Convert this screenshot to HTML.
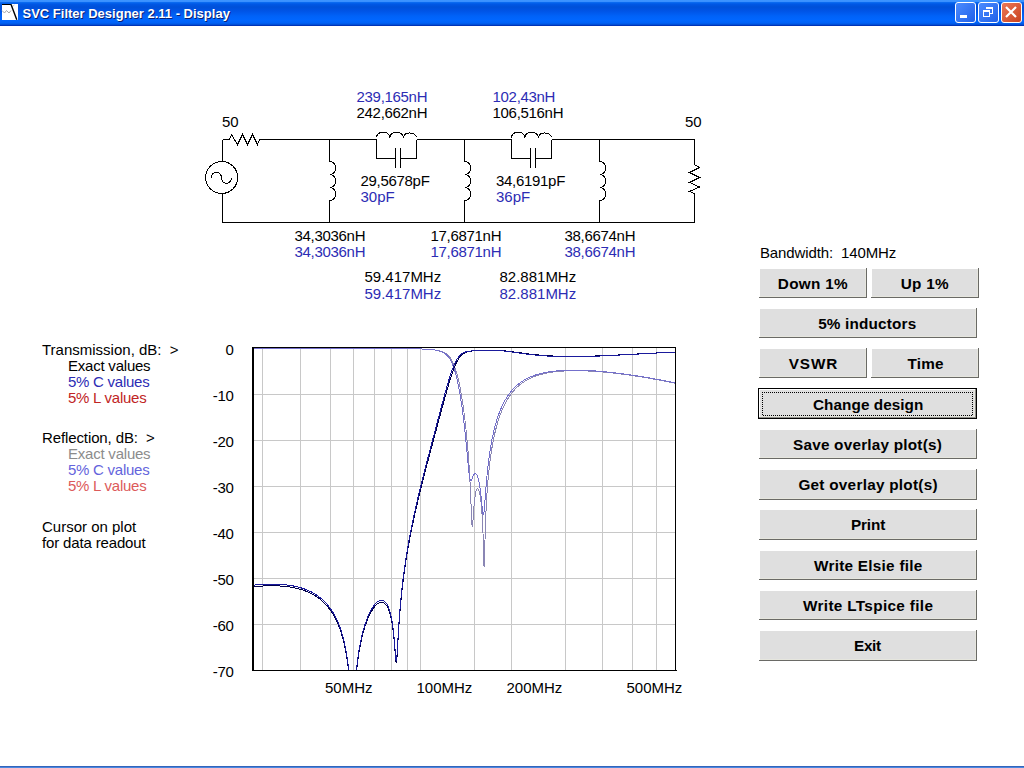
<!DOCTYPE html><html><head><meta charset="utf-8"><style>
html,body{margin:0;padding:0;width:1024px;height:768px;overflow:hidden;background:#fff}
svg{display:block}
text{font-family:"Liberation Sans", sans-serif;font-size:15px}
.b{font-weight:bold}
</style></head><body>
<svg width="1024" height="768" viewBox="0 0 1024 768">
<defs>
<linearGradient id="tb" x1="0" y1="0" x2="0" y2="1"><stop offset="0.0000" stop-color="#3D95FF"/><stop offset="0.0577" stop-color="#3A90FF"/><stop offset="0.0962" stop-color="#0A6AF0"/><stop offset="0.1538" stop-color="#0058E6"/><stop offset="0.2692" stop-color="#0050D8"/><stop offset="0.4231" stop-color="#0054E6"/><stop offset="0.6154" stop-color="#0062F8"/><stop offset="0.7692" stop-color="#0066FF"/><stop offset="0.8846" stop-color="#0062F6"/><stop offset="0.9423" stop-color="#0050D8"/><stop offset="0.9808" stop-color="#0034B8"/><stop offset="1.0000" stop-color="#0034B8"/></linearGradient>
<linearGradient id="bb" x1="0" y1="0" x2="1" y2="1"><stop offset="0" stop-color="#4D8DFF"/><stop offset="1" stop-color="#1F5FE8"/></linearGradient>
<linearGradient id="bc" x1="0" y1="0" x2="1" y2="1"><stop offset="0" stop-color="#EC7A5A"/><stop offset="1" stop-color="#C8401E"/></linearGradient>
<pattern id="dh" x="0" y="0" width="2" height="2" patternUnits="userSpaceOnUse"><rect x="0" y="0" width="1" height="1" fill="#000"/><rect x="1" y="1" width="1" height="1" fill="#000"/></pattern>
<clipPath id="plot"><rect x="252" y="347" width="424" height="324"/></clipPath>
</defs>
<rect x="0" y="0" width="1024" height="26" fill="url(#tb)"/>
<rect x="2" y="4" width="16" height="16" fill="#FFFFFF"/>
<polyline points="2,10.5 4.5,13 6.5,10.5 9,13 11,10.5" fill="none" stroke="#A8A8A8" stroke-width="1"/>
<polyline points="12.5,6.5 14.5,4.8" fill="none" stroke="#C8C8C8" stroke-width="1"/>
<rect x="2" y="4" width="9" height="1" fill="#000"/>
<line x1="11" y1="4.3" x2="16.8" y2="19.8" stroke="#000" stroke-width="1.4"/>
<text x="23.5" y="19" class="b" style="font-size:13px" fill="#0A1E70">SVC Filter Designer 2.11 - Display</text>
<text x="22.5" y="18" class="b" style="font-size:13px" fill="#FFFFFF">SVC Filter Designer 2.11 - Display</text>
<rect x="955.5" y="2.5" width="20" height="20" rx="2.5" fill="url(#bb)" stroke="#FFFFFF" stroke-width="1"/>
<rect x="978.5" y="2.5" width="20" height="20" rx="2.5" fill="url(#bb)" stroke="#FFFFFF" stroke-width="1"/>
<rect x="1001.5" y="2.5" width="20" height="20" rx="2.5" fill="url(#bc)" stroke="#FFFFFF" stroke-width="1"/>
<rect x="960" y="15" width="7" height="3" fill="#FFFFFF"/>
<path d="M983,10h7v2h-7z M983,12h1v5h-1z M989,12h1v5h-1z M983,16h7v1h-7z" fill="#FFF"/>
<path d="M986,7h7v2h-7z M992,9h1v5h-1z M990,13h3v1h-3z" fill="#FFF"/>
<path d="M1006,7 L1016,17 M1016,7 L1006,17" stroke="#FFF" stroke-width="2.2"/>
<rect x="0" y="766" width="1024" height="1" fill="#3464BA"/>
<rect x="0" y="767" width="1024" height="1" fill="#4A88E0"/>
<path d="M222.5,139.5V162 M222.5,193V222.5 M222.5,139.5H229.5 M229.5,139.5L231.5,134.5L237.5,144.5L242.5,134.5L247.5,144.5L252.5,134.5L257.5,144.5L259.5,139.5 M259.5,139.5H376.5 M416.5,139.5H511.5 M551.5,139.5H694.5 M222.5,222.5H694.5" fill="none" stroke="#000" stroke-width="1" shape-rendering="crispEdges"/>
<circle cx="221.7" cy="177.5" r="16" fill="none" stroke="#000" stroke-width="1" shape-rendering="crispEdges"/>
<path d="M211.4,177.6 A5,5.6 0 0 1 221.4,177.6 A5,5.6 0 0 0 231.4,177.8" fill="none" stroke="#000" stroke-width="1" shape-rendering="crispEdges"/>
<path d="M329.5,139.5V161.5 A6.5,6.5 0 0 1 329.5,174.5 A6.5,6.5 0 0 1 329.5,187.5 A6.5,6.5 0 0 1 329.5,200.5 V222.5" fill="none" stroke="#000" stroke-width="1" shape-rendering="crispEdges"/>
<path d="M464.5,139.5V161.5 A6.5,6.5 0 0 1 464.5,174.5 A6.5,6.5 0 0 1 464.5,187.5 A6.5,6.5 0 0 1 464.5,200.5 V222.5" fill="none" stroke="#000" stroke-width="1" shape-rendering="crispEdges"/>
<path d="M599.5,139.5V161.5 A6.5,6.5 0 0 1 599.5,174.5 A6.5,6.5 0 0 1 599.5,187.5 A6.5,6.5 0 0 1 599.5,200.5 V222.5" fill="none" stroke="#000" stroke-width="1" shape-rendering="crispEdges"/>
<path d="M376.5,139.5V158.5H395.5M400.5,158.5H416.5V139.5" fill="none" stroke="#000" stroke-width="1" shape-rendering="crispEdges"/>
<path d="M395.5,148V168M400.5,148V168" fill="none" stroke="#000" stroke-width="1" shape-rendering="crispEdges"/>
<path d="M376.5,137.5 A6.7,5.5 0 0 1 389.9,137.5 A6.7,5.5 0 0 1 403.3,137.5 A6.7,5.5 0 0 1 416.5,137.5" fill="none" stroke="#000" stroke-width="1" shape-rendering="crispEdges"/>
<path d="M511.5,139.5V158.5H530.5M535.5,158.5H551.5V139.5" fill="none" stroke="#000" stroke-width="1" shape-rendering="crispEdges"/>
<path d="M530.5,148V168M535.5,148V168" fill="none" stroke="#000" stroke-width="1" shape-rendering="crispEdges"/>
<path d="M511.5,137.5 A6.7,5.5 0 0 1 524.9,137.5 A6.7,5.5 0 0 1 538.3,137.5 A6.7,5.5 0 0 1 551.5,137.5" fill="none" stroke="#000" stroke-width="1" shape-rendering="crispEdges"/>
<path d="M694.5,139.5V164.5L699.5,167.5L689.5,172.5L699.5,177.5L689.5,182.5L699.5,187L689.5,191.5L694.5,193.5V222.5" fill="none" stroke="#000" stroke-width="1" shape-rendering="crispEdges"/>
<text x="222" y="126.5" fill="#000000">50</text>
<text x="685" y="126.5" fill="#000000">50</text>
<text x="356.5" y="101.5" fill="#2C2CB4" letter-spacing="-0.3">239,165nH</text>
<text x="356.5" y="118" fill="#000000" letter-spacing="-0.3">242,662nH</text>
<text x="360.5" y="185.5" fill="#000000" letter-spacing="-0.3">29,5678pF</text>
<text x="360.5" y="201.5" fill="#2C2CB4">30pF</text>
<text x="492.5" y="101.5" fill="#2C2CB4" letter-spacing="-0.3">102,43nH</text>
<text x="492.5" y="118" fill="#000000" letter-spacing="-0.3">106,516nH</text>
<text x="496" y="185.5" fill="#000000" letter-spacing="-0.3">34,6191pF</text>
<text x="496" y="201.5" fill="#2C2CB4">36pF</text>
<text x="294.5" y="240.5" fill="#000000" letter-spacing="-0.3">34,3036nH</text>
<text x="294.5" y="256.5" fill="#2C2CB4" letter-spacing="-0.3">34,3036nH</text>
<text x="430.5" y="240.5" fill="#000000" letter-spacing="-0.3">17,6871nH</text>
<text x="430.5" y="256.5" fill="#2C2CB4" letter-spacing="-0.3">17,6871nH</text>
<text x="564.5" y="240.5" fill="#000000" letter-spacing="-0.3">38,6674nH</text>
<text x="564.5" y="256.5" fill="#2C2CB4" letter-spacing="-0.3">38,6674nH</text>
<text x="364.5" y="281.5" fill="#000000">59.417MHz</text>
<text x="364.5" y="298.5" fill="#2C2CB4">59.417MHz</text>
<text x="499.5" y="281.5" fill="#000000">82.881MHz</text>
<text x="499.5" y="298.5" fill="#2C2CB4">82.881MHz</text>
<text x="42" y="354.5" fill="#000000">Transmission, dB:&#160;&#160;&gt;</text>
<text x="68" y="370.5" fill="#000000" letter-spacing="-0.22">Exact values</text>
<text x="68" y="386.5" fill="#2C2CB4" letter-spacing="-0.25">5% C values</text>
<text x="68" y="402.5" fill="#C02424" letter-spacing="-0.25">5% L values</text>
<text x="42" y="442.5" fill="#000000" letter-spacing="-0.11">Reflection, dB:&#160;&#160;&gt;</text>
<text x="68" y="459" fill="#8C8C8C" letter-spacing="-0.22">Exact values</text>
<text x="68" y="475" fill="#6464DC" letter-spacing="-0.25">5% C values</text>
<text x="68" y="491" fill="#DC5A5A" letter-spacing="-0.25">5% L values</text>
<text x="42" y="531.5" fill="#000000">Cursor on plot</text>
<text x="42" y="547.5" fill="#000000" letter-spacing="-0.15">for data readout</text>
<text x="760" y="257.5" fill="#000000" letter-spacing="-0.13">Bandwidth:&#160;&#160;140MHz</text>
<path d="M262.5,348V670 M300.5,348V670 M330.5,348V670 M353.5,348V670 M374.5,348V670 M391.5,348V670 M407.5,348V670 M420.5,348V670 M474.5,348V670 M511.5,348V670 M565.5,348V670 M602.5,348V670 M632.5,348V670 M656.5,348V670 M254,394.5H675 M254,440.5H675 M254,486.5H675 M254,532.5H675 M254,578.5H675 M254,624.5H675" stroke="#C8C8C8" stroke-width="1" fill="none"/>
<text x="233.6" y="355" fill="#000000" text-anchor="end" letter-spacing="-0.3">0</text>
<text x="233.6" y="401" fill="#000000" text-anchor="end" letter-spacing="-0.3">-10</text>
<text x="233.6" y="447" fill="#000000" text-anchor="end" letter-spacing="-0.3">-20</text>
<text x="233.6" y="493" fill="#000000" text-anchor="end" letter-spacing="-0.3">-30</text>
<text x="233.6" y="539" fill="#000000" text-anchor="end" letter-spacing="-0.3">-40</text>
<text x="233.6" y="585" fill="#000000" text-anchor="end" letter-spacing="-0.3">-50</text>
<text x="233.6" y="631" fill="#000000" text-anchor="end" letter-spacing="-0.3">-60</text>
<text x="233.6" y="677" fill="#000000" text-anchor="end" letter-spacing="-0.3">-70</text>
<text x="325" y="693" fill="#000000">50MHz</text>
<text x="416.5" y="693" fill="#000000">100MHz</text>
<text x="506.5" y="693" fill="#000000">200MHz</text>
<text x="626.5" y="693" fill="#000000">500MHz</text>
<g clip-path="url(#plot)" fill="none" stroke-width="1" shape-rendering="crispEdges">
<polyline points="253.0,348.09 253.2,348.09 253.5,348.09 253.8,348.09 254.0,348.09 254.2,348.09 254.5,348.09 254.8,348.09 255.0,348.09 255.2,348.09 255.5,348.09 255.8,348.09 256.0,348.09 256.2,348.09 256.5,348.09 256.8,348.09 257.0,348.09 257.2,348.09 257.5,348.09 257.8,348.09 258.0,348.09 258.2,348.09 258.5,348.09 258.8,348.09 259.0,348.09 259.2,348.10 259.5,348.10 259.8,348.10 260.0,348.10 260.2,348.10 260.5,348.10 260.8,348.10 261.0,348.10 261.2,348.10 261.5,348.10 261.8,348.10 262.0,348.10 262.2,348.10 262.5,348.10 262.8,348.10 263.0,348.10 263.2,348.10 263.5,348.10 263.8,348.10 264.0,348.10 264.2,348.10 264.5,348.10 264.8,348.10 265.0,348.10 265.2,348.10 265.5,348.10 265.8,348.10 266.0,348.10 266.2,348.10 266.5,348.10 266.8,348.10 267.0,348.10 267.2,348.10 267.5,348.10 267.8,348.10 268.0,348.10 268.2,348.10 268.5,348.10 268.8,348.10 269.0,348.10 269.2,348.10 269.5,348.10 269.8,348.10 270.0,348.10 270.2,348.10 270.5,348.11 270.8,348.11 271.0,348.11 271.2,348.11 271.5,348.11 271.8,348.11 272.0,348.11 272.2,348.11 272.5,348.11 272.8,348.11 273.0,348.11 273.2,348.11 273.5,348.11 273.8,348.11 274.0,348.11 274.2,348.11 274.5,348.11 274.8,348.11 275.0,348.11 275.2,348.11 275.5,348.11 275.8,348.11 276.0,348.11 276.2,348.11 276.5,348.11 276.8,348.11 277.0,348.11 277.2,348.11 277.5,348.11 277.8,348.11 278.0,348.11 278.2,348.11 278.5,348.11 278.8,348.11 279.0,348.11 279.2,348.11 279.5,348.11 279.8,348.11 280.0,348.11 280.2,348.11 280.5,348.11 280.8,348.12 281.0,348.12 281.2,348.12 281.5,348.12 281.8,348.12 282.0,348.12 282.2,348.12 282.5,348.12 282.8,348.12 283.0,348.12 283.2,348.12 283.5,348.12 283.8,348.12 284.0,348.12 284.2,348.12 284.5,348.12 284.8,348.12 285.0,348.12 285.2,348.12 285.5,348.12 285.8,348.12 286.0,348.12 286.2,348.12 286.5,348.12 286.8,348.12 287.0,348.12 287.2,348.12 287.5,348.12 287.8,348.12 288.0,348.12 288.2,348.12 288.5,348.12 288.8,348.12 289.0,348.12 289.2,348.12 289.5,348.12 289.8,348.13 290.0,348.13 290.2,348.13 290.5,348.13 290.8,348.13 291.0,348.13 291.2,348.13 291.5,348.13 291.8,348.13 292.0,348.13 292.2,348.13 292.5,348.13 292.8,348.13 293.0,348.13 293.2,348.13 293.5,348.13 293.8,348.13 294.0,348.13 294.2,348.13 294.5,348.13 294.8,348.13 295.0,348.13 295.2,348.13 295.5,348.13 295.8,348.13 296.0,348.13 296.2,348.13 296.5,348.13 296.8,348.13 297.0,348.13 297.2,348.13 297.5,348.13 297.8,348.14 298.0,348.14 298.2,348.14 298.5,348.14 298.8,348.14 299.0,348.14 299.2,348.14 299.5,348.14 299.8,348.14 300.0,348.14 300.2,348.14 300.5,348.14 300.8,348.14 301.0,348.14 301.2,348.14 301.5,348.14 301.8,348.14 302.0,348.14 302.2,348.14 302.5,348.14 302.8,348.14 303.0,348.14 303.2,348.14 303.5,348.14 303.8,348.14 304.0,348.14 304.2,348.14 304.5,348.14 304.8,348.14 305.0,348.14 305.2,348.15 305.5,348.15 305.8,348.15 306.0,348.15 306.2,348.15 306.5,348.15 306.8,348.15 307.0,348.15 307.2,348.15 307.5,348.15 307.8,348.15 308.0,348.15 308.2,348.15 308.5,348.15 308.8,348.15 309.0,348.15 309.2,348.15 309.5,348.15 309.8,348.15 310.0,348.15 310.2,348.15 310.5,348.15 310.8,348.15 311.0,348.15 311.2,348.15 311.5,348.15 311.8,348.16 312.0,348.16 312.2,348.16 312.5,348.16 312.8,348.16 313.0,348.16 313.2,348.16 313.5,348.16 313.8,348.16 314.0,348.16 314.2,348.16 314.5,348.16 314.8,348.16 315.0,348.16 315.2,348.16 315.5,348.16 315.8,348.16 316.0,348.16 316.2,348.16 316.5,348.16 316.8,348.16 317.0,348.16 317.2,348.16 317.5,348.16 317.8,348.16 318.0,348.17 318.2,348.17 318.5,348.17 318.8,348.17 319.0,348.17 319.2,348.17 319.5,348.17 319.8,348.17 320.0,348.17 320.2,348.17 320.5,348.17 320.8,348.17 321.0,348.17 321.2,348.17 321.5,348.17 321.8,348.17 322.0,348.17 322.2,348.17 322.5,348.17 322.8,348.17 323.0,348.17 323.2,348.17 323.5,348.18 323.8,348.18 324.0,348.18 324.2,348.18 324.5,348.18 324.8,348.18 325.0,348.18 325.2,348.18 325.5,348.18 325.8,348.18 326.0,348.18 326.2,348.18 326.5,348.18 326.8,348.18 327.0,348.18 327.2,348.18 327.5,348.18 327.8,348.18 328.0,348.18 328.2,348.18 328.5,348.19 328.8,348.19 329.0,348.19 329.2,348.19 329.5,348.19 329.8,348.19 330.0,348.19 330.2,348.19 330.5,348.19 330.8,348.19 331.0,348.19 331.2,348.19 331.5,348.19 331.8,348.19 332.0,348.19 332.2,348.19 332.5,348.19 332.8,348.19 333.0,348.19 333.2,348.20 333.5,348.20 333.8,348.20 334.0,348.20 334.2,348.20 334.5,348.20 334.8,348.20 335.0,348.20 335.2,348.20 335.5,348.20 335.8,348.20 336.0,348.20 336.2,348.20 336.5,348.20 336.8,348.20 337.0,348.20 337.2,348.20 337.5,348.20 337.8,348.21 338.0,348.21 338.2,348.21 338.5,348.21 338.8,348.21 339.0,348.21 339.2,348.21 339.5,348.21 339.8,348.21 340.0,348.21 340.2,348.21 340.5,348.21 340.8,348.21 341.0,348.21 341.2,348.21 341.5,348.21 341.8,348.22 342.0,348.22 342.2,348.22 342.5,348.22 342.8,348.22 343.0,348.22 343.2,348.22 343.5,348.22 343.8,348.22 344.0,348.22 344.2,348.22 344.5,348.22 344.8,348.22 345.0,348.22 345.2,348.22 345.5,348.23 345.8,348.23 346.0,348.23 346.2,348.23 346.5,348.23 346.8,348.23 347.0,348.23 347.2,348.23 347.5,348.23 347.8,348.23 348.0,348.23 348.2,348.23 348.5,348.23 348.8,348.23 349.0,348.24 349.2,348.24 349.5,348.24 349.8,348.24 350.0,348.24 350.2,348.24 350.5,348.24 350.8,348.24 351.0,348.24 351.2,348.24 351.5,348.24 351.8,348.24 352.0,348.24 352.2,348.25 352.5,348.25 352.8,348.25 353.0,348.25 353.2,348.25 353.5,348.25 353.8,348.25 354.0,348.25 354.2,348.25 354.5,348.25 354.8,348.25 355.0,348.25 355.2,348.25 355.5,348.26 355.8,348.26 356.0,348.26 356.2,348.26 356.5,348.26 356.8,348.26 357.0,348.26 357.2,348.26 357.5,348.26 357.8,348.26 358.0,348.26 358.2,348.27 358.5,348.27 358.8,348.27 359.0,348.27 359.2,348.27 359.5,348.27 359.8,348.27 360.0,348.27 360.2,348.27 360.5,348.27 360.8,348.27 361.0,348.28 361.2,348.28 361.5,348.28 361.8,348.28 362.0,348.28 362.2,348.28 362.5,348.28 362.8,348.28 363.0,348.28 363.2,348.28 363.5,348.28 363.8,348.29 364.0,348.29 364.2,348.29 364.5,348.29 364.8,348.29 365.0,348.29 365.2,348.29 365.5,348.29 365.8,348.29 366.0,348.30 366.2,348.30 366.5,348.30 366.8,348.30 367.0,348.30 367.2,348.30 367.5,348.30 367.8,348.30 368.0,348.30 368.2,348.31 368.5,348.31 368.8,348.31 369.0,348.31 369.2,348.31 369.5,348.31 369.8,348.31 370.0,348.31 370.2,348.31 370.5,348.32 370.8,348.32 371.0,348.32 371.2,348.32 371.5,348.32 371.8,348.32 372.0,348.32 372.2,348.32 372.5,348.33 372.8,348.33 373.0,348.33 373.2,348.33 373.5,348.33 373.8,348.33 374.0,348.33 374.2,348.33 374.5,348.34 374.8,348.34 375.0,348.34 375.2,348.34 375.5,348.34 375.8,348.34 376.0,348.34 376.2,348.34 376.5,348.35 376.8,348.35 377.0,348.35 377.2,348.35 377.5,348.35 377.8,348.35 378.0,348.35 378.2,348.36 378.5,348.36 378.8,348.36 379.0,348.36 379.2,348.36 379.5,348.36 379.8,348.36 380.0,348.37 380.2,348.37 380.5,348.37 380.8,348.37 381.0,348.37 381.2,348.37 381.5,348.38 381.8,348.38 382.0,348.38 382.2,348.38 382.5,348.38 382.8,348.38 383.0,348.39 383.2,348.39 383.5,348.39 383.8,348.39 384.0,348.39 384.2,348.39 384.5,348.40 384.8,348.40 385.0,348.40 385.2,348.40 385.5,348.40 385.8,348.40 386.0,348.41 386.2,348.41 386.5,348.41 386.8,348.41 387.0,348.41 387.2,348.42 387.5,348.42 387.8,348.42 388.0,348.42 388.2,348.42 388.5,348.43 388.8,348.43 389.0,348.43 389.2,348.43 389.5,348.43 389.8,348.44 390.0,348.44 390.2,348.44 390.5,348.44 390.8,348.44 391.0,348.45 391.2,348.45 391.5,348.45 391.8,348.45 392.0,348.45 392.2,348.46 392.5,348.46 392.8,348.46 393.0,348.46 393.2,348.47 393.5,348.47 393.8,348.47 394.0,348.47 394.2,348.47 394.5,348.48 394.8,348.48 395.0,348.48 395.2,348.48 395.5,348.49 395.8,348.49 396.0,348.49 396.2,348.49 396.5,348.50 396.8,348.50 397.0,348.50 397.2,348.50 397.5,348.51 397.8,348.51 398.0,348.51 398.2,348.52 398.5,348.52 398.8,348.52 399.0,348.52 399.2,348.53 399.5,348.53 399.8,348.53 400.0,348.53 400.2,348.54 400.5,348.54 400.8,348.54 401.0,348.55 401.2,348.55 401.5,348.55 401.8,348.56 402.0,348.56 402.2,348.56 402.5,348.57 402.8,348.57 403.0,348.57 403.2,348.58 403.5,348.58 403.8,348.58 404.0,348.59 404.2,348.59 404.5,348.59 404.8,348.60 405.0,348.60 405.2,348.60 405.5,348.61 405.8,348.61 406.0,348.61 406.2,348.62 406.5,348.62 406.8,348.63 407.0,348.63 407.2,348.63 407.5,348.64 407.8,348.64 408.0,348.65 408.2,348.65 408.5,348.65 408.8,348.66 409.0,348.66 409.2,348.67 409.5,348.67 409.8,348.68 410.0,348.68 410.2,348.68 410.5,348.69 410.8,348.69 411.0,348.70 411.2,348.70 411.5,348.71 411.8,348.71 412.0,348.72 412.2,348.72 412.5,348.73 412.8,348.73 413.0,348.74 413.2,348.74 413.5,348.75 413.8,348.75 414.0,348.76 414.2,348.77 414.5,348.77 414.8,348.78 415.0,348.78 415.2,348.79 415.5,348.80 415.8,348.80 416.0,348.81 416.2,348.81 416.5,348.82 416.8,348.83 417.0,348.83 417.2,348.84 417.5,348.85 417.8,348.85 418.0,348.86 418.2,348.87 418.5,348.88 418.8,348.88 419.0,348.89 419.2,348.90 419.5,348.91 419.8,348.91 420.0,348.92 420.2,348.93 420.5,348.94 420.8,348.95 421.0,348.96 421.2,348.97 421.5,348.97 421.8,348.98 422.0,348.99 422.2,349.00 422.5,349.01 422.8,349.02 423.0,349.03 423.2,349.04 423.5,349.05 423.8,349.06 424.0,349.07 424.2,349.09 424.5,349.10 424.8,349.11 425.0,349.12 425.2,349.13 425.5,349.15 425.8,349.16 426.0,349.17 426.2,349.18 426.5,349.20 426.8,349.21 427.0,349.23 427.2,349.24 427.5,349.26 427.8,349.27 428.0,349.29 428.2,349.30 428.5,349.32 428.8,349.34 429.0,349.35 429.2,349.37 429.5,349.39 429.8,349.41 430.0,349.43 430.2,349.45 430.5,349.47 430.8,349.49 431.0,349.51 431.2,349.53 431.5,349.55 431.8,349.58 432.0,349.60 432.2,349.62 432.5,349.65 432.8,349.68 433.0,349.70 433.2,349.73 433.5,349.76 433.8,349.79 434.0,349.82 434.2,349.85 434.5,349.88 434.8,349.91 435.0,349.95 435.2,349.98 435.5,350.02 435.8,350.05 436.0,350.09 436.2,350.13 436.5,350.17 436.8,350.22 437.0,350.26 437.2,350.31 437.5,350.35 437.8,350.40 438.0,350.45 438.2,350.50 438.5,350.56 438.8,350.61 439.0,350.67 439.2,350.73 439.5,350.80 439.8,350.86 440.0,350.93 440.2,351.00 440.5,351.07 440.8,351.14 441.0,351.22 441.2,351.30 441.5,351.39 441.8,351.47 442.0,351.56 442.2,351.66 442.5,351.75 442.8,351.86 443.0,351.96 443.2,352.07 443.5,352.19 443.8,352.30 444.0,352.43 444.2,352.56 444.5,352.69 444.8,352.83 445.0,352.97 445.2,353.13 445.5,353.28 445.8,353.45 446.0,353.62 446.2,353.80 446.5,353.98 446.8,354.17 447.0,354.37 447.2,354.58 447.5,354.80 447.8,355.03 448.0,355.27 448.2,355.51 448.5,355.77 448.8,356.04 449.0,356.32 449.2,356.61 449.5,356.91 449.8,357.22 450.0,357.55 450.2,357.89 450.5,358.25 450.8,358.62 451.0,359.00 451.2,359.40 451.5,359.82 451.8,360.25 452.0,360.70 452.2,361.17 452.5,361.66 452.8,362.16 453.0,362.68 453.2,363.23 453.5,363.79 453.8,364.38 454.0,364.98 454.2,365.61 454.5,366.26 454.8,366.94 455.0,367.64 455.2,368.36 455.5,369.11 455.8,369.88 456.0,370.67 456.2,371.50 456.5,372.35 456.8,373.22 457.0,374.13 457.2,375.06 457.5,376.02 457.8,377.01 458.0,378.03 458.2,379.07 458.5,380.15 458.8,381.26 459.0,382.40 459.2,383.57 459.5,384.77 459.8,386.00 460.0,387.26 460.2,388.56 460.5,389.89 460.8,391.26 461.0,392.65 461.2,394.09 461.5,395.56 461.8,397.06 462.0,398.61 462.2,400.19 462.5,401.81 462.8,403.47 463.0,405.17 463.2,406.92 463.5,408.70 463.8,410.54 464.0,412.42 464.2,414.34 464.5,416.32 464.8,418.35 465.0,420.44 465.2,422.58 465.5,424.79 465.8,427.06 466.0,429.40 466.2,431.81 466.5,434.30 466.8,436.87 467.0,439.53 467.2,442.28 467.5,445.13 467.8,448.10 468.0,451.19 468.2,454.41 468.5,457.77 468.8,461.30 469.0,465.00 469.2,468.90 469.5,473.02 469.8,477.38 470.0,482.00 470.2,486.92 470.5,492.16 470.8,497.72 471.0,503.56 471.2,509.58 471.5,515.50 471.8,520.81 472.0,524.70 472.2,526.44 472.5,525.81 472.8,523.37 473.0,519.94 473.2,516.20 473.5,512.52 473.8,509.10 474.0,506.00 474.2,503.23 474.5,500.78 474.8,498.62 475.0,496.73 475.2,495.09 475.5,493.67 475.8,492.46 476.0,491.44 476.2,490.59 476.5,489.91 476.8,489.39 477.0,489.01 477.2,488.78 477.5,488.68 477.8,488.72 478.0,488.89 478.2,489.19 478.5,489.63 478.8,490.20 479.0,490.90 479.2,491.74 479.5,492.73 479.8,493.88 480.0,495.19 480.2,496.67 480.5,498.34 480.8,500.23 481.0,502.34 481.2,504.72 481.5,507.38 481.8,510.39 482.0,513.80 482.2,517.68 482.5,522.14 482.8,527.29 483.0,533.30 483.2,540.37 483.5,548.63 483.8,557.76 484.0,565.64 484.2,567.14 484.5,560.38 484.8,550.29 485.0,540.47 485.2,531.79 485.5,524.23 485.8,517.62 486.0,511.77 486.2,506.54 486.5,501.81 486.8,497.49 487.0,493.52 487.2,489.85 487.5,486.44 487.8,483.24 488.0,480.25 488.2,477.42 488.5,474.75 488.8,472.22 489.0,469.81 489.2,467.52 489.5,465.32 489.8,463.23 490.0,461.21 490.2,459.28 490.5,457.43 490.8,455.64 491.0,453.91 491.2,452.25 491.5,450.64 491.8,449.09 492.0,447.58 492.2,446.12 492.5,444.71 492.8,443.33 493.0,442.00 493.2,440.70 493.5,439.44 493.8,438.22 494.0,437.02 494.2,435.86 494.5,434.73 494.8,433.62 495.0,432.55 495.2,431.49 495.5,430.47 495.8,429.47 496.0,428.49 496.2,427.53 496.5,426.59 496.8,425.68 497.0,424.79 497.2,423.91 497.5,423.05 497.8,422.22 498.0,421.39 498.2,420.59 498.5,419.80 498.8,419.03 499.0,418.27 499.2,417.53 499.5,416.80 499.8,416.09 500.0,415.39 500.2,414.70 500.5,414.03 500.8,413.37 501.0,412.72 501.2,412.08 501.5,411.46 501.8,410.84 502.0,410.24 502.2,409.65 502.5,409.06 502.8,408.49 503.0,407.93 503.2,407.38 503.5,406.83 503.8,406.30 504.0,405.78 504.2,405.26 504.5,404.75 504.8,404.25 505.0,403.76 505.2,403.28 505.5,402.80 505.8,402.34 506.0,401.88 506.2,401.43 506.5,400.98 506.8,400.54 507.0,400.11 507.2,399.69 507.5,399.27 507.8,398.86 508.0,398.46 508.2,398.06 508.5,397.66 508.8,397.28 509.0,396.90 509.2,396.52 509.5,396.16 509.8,395.79 510.0,395.43 510.2,395.08 510.5,394.73 510.8,394.39 511.0,394.06 511.2,393.72 511.5,393.40 511.8,393.07 512.0,392.76 512.2,392.44 512.5,392.13 512.8,391.83 513.0,391.53 513.2,391.24 513.5,390.94 513.8,390.66 514.0,390.38 514.2,390.10 514.5,389.82 514.8,389.55 515.0,389.28 515.2,389.02 515.5,388.76 515.8,388.50 516.0,388.25 516.2,388.00 516.5,387.76 516.8,387.51 517.0,387.28 517.2,387.04 517.5,386.81 517.8,386.58 518.0,386.35 518.2,386.13 518.5,385.91 518.8,385.69 519.0,385.48 519.2,385.27 519.5,385.06 519.8,384.86 520.0,384.65 520.2,384.45 520.5,384.26 520.8,384.06 521.0,383.87 521.2,383.68 521.5,383.49 521.8,383.31 522.0,383.13 522.2,382.95 522.5,382.77 522.8,382.60 523.0,382.42 523.2,382.25 523.5,382.08 523.8,381.92 524.0,381.76 524.2,381.59 524.5,381.43 524.8,381.28 525.0,381.12 525.2,380.97 525.5,380.82 525.8,380.67 526.0,380.52 526.2,380.38 526.5,380.23 526.8,380.09 527.0,379.95 527.2,379.81 527.5,379.68 527.8,379.54 528.0,379.41 528.2,379.28 528.5,379.15 528.8,379.02 529.0,378.90 529.2,378.77 529.5,378.65 529.8,378.53 530.0,378.41 530.2,378.29 530.5,378.17 530.8,378.06 531.0,377.94 531.2,377.83 531.5,377.72 531.8,377.61 532.0,377.50 532.2,377.40 532.5,377.29 532.8,377.19 533.0,377.09 533.2,376.99 533.5,376.89 533.8,376.79 534.0,376.69 534.2,376.59 534.5,376.50 534.8,376.40 535.0,376.31 535.2,376.22 535.5,376.13 535.8,376.04 536.0,375.95 536.2,375.87 536.5,375.78 536.8,375.70 537.0,375.61 537.2,375.53 537.5,375.45 537.8,375.37 538.0,375.29 538.2,375.21 538.5,375.14 538.8,375.06 539.0,374.98 539.2,374.91 539.5,374.84 539.8,374.77 540.0,374.69 540.2,374.62 540.5,374.55 540.8,374.49 541.0,374.42 541.2,374.35 541.5,374.29 541.8,374.22 542.0,374.16 542.2,374.09 542.5,374.03 542.8,373.97 543.0,373.91 543.2,373.85 543.5,373.79 543.8,373.73 544.0,373.67 544.2,373.62 544.5,373.56 544.8,373.51 545.0,373.45 545.2,373.40 545.5,373.34 545.8,373.29 546.0,373.24 546.2,373.19 546.5,373.14 546.8,373.09 547.0,373.04 547.2,372.99 547.5,372.95 547.8,372.90 548.0,372.85 548.2,372.81 548.5,372.76 548.8,372.72 549.0,372.68 549.2,372.63 549.5,372.59 549.8,372.55 550.0,372.51 550.2,372.47 550.5,372.43 550.8,372.39 551.0,372.35 551.2,372.31 551.5,372.27 551.8,372.24 552.0,372.20 552.2,372.17 552.5,372.13 552.8,372.10 553.0,372.06 553.2,372.03 553.5,372.00 553.8,371.96 554.0,371.93 554.2,371.90 554.5,371.87 554.8,371.84 555.0,371.81 555.2,371.78 555.5,371.75 555.8,371.72 556.0,371.69 556.2,371.67 556.5,371.64 556.8,371.61 557.0,371.59 557.2,371.56 557.5,371.54 557.8,371.51 558.0,371.49 558.2,371.46 558.5,371.44 558.8,371.42 559.0,371.39 559.2,371.37 559.5,371.35 559.8,371.33 560.0,371.31 560.2,371.29 560.5,371.27 560.8,371.25 561.0,371.23 561.2,371.21 561.5,371.19 561.8,371.18 562.0,371.16 562.2,371.14 562.5,371.12 562.8,371.11 563.0,371.09 563.2,371.08 563.5,371.06 563.8,371.05 564.0,371.03 564.2,371.02 564.5,371.00 564.8,370.99 565.0,370.98 565.2,370.97 565.5,370.95 565.8,370.94 566.0,370.93 566.2,370.92 566.5,370.91 566.8,370.90 567.0,370.89 567.2,370.88 567.5,370.87 567.8,370.86 568.0,370.85 568.2,370.84 568.5,370.83 568.8,370.82 569.0,370.82 569.2,370.81 569.5,370.80 569.8,370.80 570.0,370.79 570.2,370.78 570.5,370.78 570.8,370.77 571.0,370.77 571.2,370.76 571.5,370.76 571.8,370.75 572.0,370.75 572.2,370.75 572.5,370.74 572.8,370.74 573.0,370.74 573.2,370.73 573.5,370.73 573.8,370.73 574.0,370.73 574.2,370.73 574.5,370.72 574.8,370.72 575.0,370.72 575.2,370.72 575.5,370.72 575.8,370.72 576.0,370.72 576.2,370.72 576.5,370.72 576.8,370.73 577.0,370.73 577.2,370.73 577.5,370.73 577.8,370.73 578.0,370.74 578.2,370.74 578.5,370.74 578.8,370.74 579.0,370.75 579.2,370.75 579.5,370.76 579.8,370.76 580.0,370.76 580.2,370.77 580.5,370.77 580.8,370.78 581.0,370.78 581.2,370.79 581.5,370.80 581.8,370.80 582.0,370.81 582.2,370.81 582.5,370.82 582.8,370.83 583.0,370.84 583.2,370.84 583.5,370.85 583.8,370.86 584.0,370.87 584.2,370.87 584.5,370.88 584.8,370.89 585.0,370.90 585.2,370.91 585.5,370.92 585.8,370.93 586.0,370.94 586.2,370.95 586.5,370.96 586.8,370.97 587.0,370.98 587.2,370.99 587.5,371.00 587.8,371.01 588.0,371.02 588.2,371.04 588.5,371.05 588.8,371.06 589.0,371.07 589.2,371.08 589.5,371.10 589.8,371.11 590.0,371.12 590.2,371.13 590.5,371.15 590.8,371.16 591.0,371.18 591.2,371.19 591.5,371.20 591.8,371.22 592.0,371.23 592.2,371.25 592.5,371.26 592.8,371.28 593.0,371.29 593.2,371.31 593.5,371.32 593.8,371.34 594.0,371.35 594.2,371.37 594.5,371.39 594.8,371.40 595.0,371.42 595.2,371.44 595.5,371.45 595.8,371.47 596.0,371.49 596.2,371.50 596.5,371.52 596.8,371.54 597.0,371.56 597.2,371.58 597.5,371.59 597.8,371.61 598.0,371.63 598.2,371.65 598.5,371.67 598.8,371.69 599.0,371.71 599.2,371.73 599.5,371.75 599.8,371.77 600.0,371.79 600.2,371.81 600.5,371.83 600.8,371.85 601.0,371.87 601.2,371.89 601.5,371.91 601.8,371.93 602.0,371.95 602.2,371.97 602.5,371.99 602.8,372.02 603.0,372.04 603.2,372.06 603.5,372.08 603.8,372.10 604.0,372.13 604.2,372.15 604.5,372.17 604.8,372.20 605.0,372.22 605.2,372.24 605.5,372.27 605.8,372.29 606.0,372.31 606.2,372.34 606.5,372.36 606.8,372.38 607.0,372.41 607.2,372.43 607.5,372.46 607.8,372.48 608.0,372.51 608.2,372.53 608.5,372.56 608.8,372.58 609.0,372.61 609.2,372.63 609.5,372.66 609.8,372.68 610.0,372.71 610.2,372.74 610.5,372.76 610.8,372.79 611.0,372.82 611.2,372.84 611.5,372.87 611.8,372.90 612.0,372.92 612.2,372.95 612.5,372.98 612.8,373.00 613.0,373.03 613.2,373.06 613.5,373.09 613.8,373.12 614.0,373.14 614.2,373.17 614.5,373.20 614.8,373.23 615.0,373.26 615.2,373.29 615.5,373.31 615.8,373.34 616.0,373.37 616.2,373.40 616.5,373.43 616.8,373.46 617.0,373.49 617.2,373.52 617.5,373.55 617.8,373.58 618.0,373.61 618.2,373.64 618.5,373.67 618.8,373.70 619.0,373.73 619.2,373.76 619.5,373.79 619.8,373.83 620.0,373.86 620.2,373.89 620.5,373.92 620.8,373.95 621.0,373.98 621.2,374.01 621.5,374.05 621.8,374.08 622.0,374.11 622.2,374.14 622.5,374.17 622.8,374.21 623.0,374.24 623.2,374.27 623.5,374.31 623.8,374.34 624.0,374.37 624.2,374.40 624.5,374.44 624.8,374.47 625.0,374.51 625.2,374.54 625.5,374.57 625.8,374.61 626.0,374.64 626.2,374.67 626.5,374.71 626.8,374.74 627.0,374.78 627.2,374.81 627.5,374.85 627.8,374.88 628.0,374.92 628.2,374.95 628.5,374.99 628.8,375.02 629.0,375.06 629.2,375.09 629.5,375.13 629.8,375.16 630.0,375.20 630.2,375.24 630.5,375.27 630.8,375.31 631.0,375.34 631.2,375.38 631.5,375.42 631.8,375.45 632.0,375.49 632.2,375.53 632.5,375.56 632.8,375.60 633.0,375.64 633.2,375.68 633.5,375.71 633.8,375.75 634.0,375.79 634.2,375.83 634.5,375.86 634.8,375.90 635.0,375.94 635.2,375.98 635.5,376.02 635.8,376.05 636.0,376.09 636.2,376.13 636.5,376.17 636.8,376.21 637.0,376.25 637.2,376.29 637.5,376.32 637.8,376.36 638.0,376.40 638.2,376.44 638.5,376.48 638.8,376.52 639.0,376.56 639.2,376.60 639.5,376.64 639.8,376.68 640.0,376.72 640.2,376.76 640.5,376.80 640.8,376.84 641.0,376.88 641.2,376.92 641.5,376.96 641.8,377.00 642.0,377.04 642.2,377.09 642.5,377.13 642.8,377.17 643.0,377.21 643.2,377.25 643.5,377.29 643.8,377.33 644.0,377.37 644.2,377.42 644.5,377.46 644.8,377.50 645.0,377.54 645.2,377.58 645.5,377.63 645.8,377.67 646.0,377.71 646.2,377.75 646.5,377.80 646.8,377.84 647.0,377.88 647.2,377.92 647.5,377.97 647.8,378.01 648.0,378.05 648.2,378.10 648.5,378.14 648.8,378.18 649.0,378.23 649.2,378.27 649.5,378.31 649.8,378.36 650.0,378.40 650.2,378.44 650.5,378.49 650.8,378.53 651.0,378.58 651.2,378.62 651.5,378.67 651.8,378.71 652.0,378.75 652.2,378.80 652.5,378.84 652.8,378.89 653.0,378.93 653.2,378.98 653.5,379.02 653.8,379.07 654.0,379.11 654.2,379.16 654.5,379.20 654.8,379.25 655.0,379.30 655.2,379.34 655.5,379.39 655.8,379.43 656.0,379.48 656.2,379.53 656.5,379.57 656.8,379.62 657.0,379.66 657.2,379.71 657.5,379.76 657.8,379.80 658.0,379.85 658.2,379.90 658.5,379.94 658.8,379.99 659.0,380.04 659.2,380.08 659.5,380.13 659.8,380.18 660.0,380.23 660.2,380.27 660.5,380.32 660.8,380.37 661.0,380.42 661.2,380.46 661.5,380.51 661.8,380.56 662.0,380.61 662.2,380.66 662.5,380.70 662.8,380.75 663.0,380.80 663.2,380.85 663.5,380.90 663.8,380.95 664.0,380.99 664.2,381.04 664.5,381.09 664.8,381.14 665.0,381.19 665.2,381.24 665.5,381.29 665.8,381.34 666.0,381.39 666.2,381.43 666.5,381.48 666.8,381.53 667.0,381.58 667.2,381.63 667.5,381.68 667.8,381.73 668.0,381.78 668.2,381.83 668.5,381.88 668.8,381.93 669.0,381.98 669.2,382.03 669.5,382.08 669.8,382.13 670.0,382.18 670.2,382.23 670.5,382.28 670.8,382.34 671.0,382.39 671.2,382.44 671.5,382.49 671.8,382.54 672.0,382.59 672.2,382.64 672.5,382.69 672.8,382.74 673.0,382.79 673.2,382.85 673.5,382.90 673.8,382.95 674.0,383.00 674.2,383.05 674.5,383.10 674.8,383.16 675.0,383.21" stroke="#8A86B4"/>
<polyline points="253.0,348.09 253.2,348.09 253.5,348.09 253.8,348.09 254.0,348.09 254.2,348.09 254.5,348.09 254.8,348.09 255.0,348.09 255.2,348.09 255.5,348.09 255.8,348.09 256.0,348.09 256.2,348.09 256.5,348.09 256.8,348.09 257.0,348.09 257.2,348.09 257.5,348.09 257.8,348.09 258.0,348.09 258.2,348.09 258.5,348.09 258.8,348.09 259.0,348.09 259.2,348.10 259.5,348.10 259.8,348.10 260.0,348.10 260.2,348.10 260.5,348.10 260.8,348.10 261.0,348.10 261.2,348.10 261.5,348.10 261.8,348.10 262.0,348.10 262.2,348.10 262.5,348.10 262.8,348.10 263.0,348.10 263.2,348.10 263.5,348.10 263.8,348.10 264.0,348.10 264.2,348.10 264.5,348.10 264.8,348.10 265.0,348.10 265.2,348.10 265.5,348.10 265.8,348.10 266.0,348.10 266.2,348.10 266.5,348.10 266.8,348.10 267.0,348.10 267.2,348.10 267.5,348.10 267.8,348.10 268.0,348.10 268.2,348.10 268.5,348.10 268.8,348.10 269.0,348.10 269.2,348.10 269.5,348.10 269.8,348.10 270.0,348.10 270.2,348.10 270.5,348.11 270.8,348.11 271.0,348.11 271.2,348.11 271.5,348.11 271.8,348.11 272.0,348.11 272.2,348.11 272.5,348.11 272.8,348.11 273.0,348.11 273.2,348.11 273.5,348.11 273.8,348.11 274.0,348.11 274.2,348.11 274.5,348.11 274.8,348.11 275.0,348.11 275.2,348.11 275.5,348.11 275.8,348.11 276.0,348.11 276.2,348.11 276.5,348.11 276.8,348.11 277.0,348.11 277.2,348.11 277.5,348.11 277.8,348.11 278.0,348.11 278.2,348.11 278.5,348.11 278.8,348.11 279.0,348.11 279.2,348.11 279.5,348.11 279.8,348.11 280.0,348.11 280.2,348.11 280.5,348.11 280.8,348.12 281.0,348.12 281.2,348.12 281.5,348.12 281.8,348.12 282.0,348.12 282.2,348.12 282.5,348.12 282.8,348.12 283.0,348.12 283.2,348.12 283.5,348.12 283.8,348.12 284.0,348.12 284.2,348.12 284.5,348.12 284.8,348.12 285.0,348.12 285.2,348.12 285.5,348.12 285.8,348.12 286.0,348.12 286.2,348.12 286.5,348.12 286.8,348.12 287.0,348.12 287.2,348.12 287.5,348.12 287.8,348.12 288.0,348.12 288.2,348.12 288.5,348.12 288.8,348.12 289.0,348.12 289.2,348.12 289.5,348.12 289.8,348.13 290.0,348.13 290.2,348.13 290.5,348.13 290.8,348.13 291.0,348.13 291.2,348.13 291.5,348.13 291.8,348.13 292.0,348.13 292.2,348.13 292.5,348.13 292.8,348.13 293.0,348.13 293.2,348.13 293.5,348.13 293.8,348.13 294.0,348.13 294.2,348.13 294.5,348.13 294.8,348.13 295.0,348.13 295.2,348.13 295.5,348.13 295.8,348.13 296.0,348.13 296.2,348.13 296.5,348.13 296.8,348.13 297.0,348.13 297.2,348.13 297.5,348.13 297.8,348.14 298.0,348.14 298.2,348.14 298.5,348.14 298.8,348.14 299.0,348.14 299.2,348.14 299.5,348.14 299.8,348.14 300.0,348.14 300.2,348.14 300.5,348.14 300.8,348.14 301.0,348.14 301.2,348.14 301.5,348.14 301.8,348.14 302.0,348.14 302.2,348.14 302.5,348.14 302.8,348.14 303.0,348.14 303.2,348.14 303.5,348.14 303.8,348.14 304.0,348.14 304.2,348.14 304.5,348.14 304.8,348.14 305.0,348.15 305.2,348.15 305.5,348.15 305.8,348.15 306.0,348.15 306.2,348.15 306.5,348.15 306.8,348.15 307.0,348.15 307.2,348.15 307.5,348.15 307.8,348.15 308.0,348.15 308.2,348.15 308.5,348.15 308.8,348.15 309.0,348.15 309.2,348.15 309.5,348.15 309.8,348.15 310.0,348.15 310.2,348.15 310.5,348.15 310.8,348.15 311.0,348.15 311.2,348.15 311.5,348.15 311.8,348.16 312.0,348.16 312.2,348.16 312.5,348.16 312.8,348.16 313.0,348.16 313.2,348.16 313.5,348.16 313.8,348.16 314.0,348.16 314.2,348.16 314.5,348.16 314.8,348.16 315.0,348.16 315.2,348.16 315.5,348.16 315.8,348.16 316.0,348.16 316.2,348.16 316.5,348.16 316.8,348.16 317.0,348.16 317.2,348.16 317.5,348.16 317.8,348.17 318.0,348.17 318.2,348.17 318.5,348.17 318.8,348.17 319.0,348.17 319.2,348.17 319.5,348.17 319.8,348.17 320.0,348.17 320.2,348.17 320.5,348.17 320.8,348.17 321.0,348.17 321.2,348.17 321.5,348.17 321.8,348.17 322.0,348.17 322.2,348.17 322.5,348.17 322.8,348.17 323.0,348.17 323.2,348.18 323.5,348.18 323.8,348.18 324.0,348.18 324.2,348.18 324.5,348.18 324.8,348.18 325.0,348.18 325.2,348.18 325.5,348.18 325.8,348.18 326.0,348.18 326.2,348.18 326.5,348.18 326.8,348.18 327.0,348.18 327.2,348.18 327.5,348.18 327.8,348.18 328.0,348.18 328.2,348.18 328.5,348.19 328.8,348.19 329.0,348.19 329.2,348.19 329.5,348.19 329.8,348.19 330.0,348.19 330.2,348.19 330.5,348.19 330.8,348.19 331.0,348.19 331.2,348.19 331.5,348.19 331.8,348.19 332.0,348.19 332.2,348.19 332.5,348.19 332.8,348.19 333.0,348.19 333.2,348.20 333.5,348.20 333.8,348.20 334.0,348.20 334.2,348.20 334.5,348.20 334.8,348.20 335.0,348.20 335.2,348.20 335.5,348.20 335.8,348.20 336.0,348.20 336.2,348.20 336.5,348.20 336.8,348.20 337.0,348.20 337.2,348.20 337.5,348.21 337.8,348.21 338.0,348.21 338.2,348.21 338.5,348.21 338.8,348.21 339.0,348.21 339.2,348.21 339.5,348.21 339.8,348.21 340.0,348.21 340.2,348.21 340.5,348.21 340.8,348.21 341.0,348.21 341.2,348.21 341.5,348.22 341.8,348.22 342.0,348.22 342.2,348.22 342.5,348.22 342.8,348.22 343.0,348.22 343.2,348.22 343.5,348.22 343.8,348.22 344.0,348.22 344.2,348.22 344.5,348.22 344.8,348.22 345.0,348.22 345.2,348.23 345.5,348.23 345.8,348.23 346.0,348.23 346.2,348.23 346.5,348.23 346.8,348.23 347.0,348.23 347.2,348.23 347.5,348.23 347.8,348.23 348.0,348.23 348.2,348.23 348.5,348.23 348.8,348.24 349.0,348.24 349.2,348.24 349.5,348.24 349.8,348.24 350.0,348.24 350.2,348.24 350.5,348.24 350.8,348.24 351.0,348.24 351.2,348.24 351.5,348.24 351.8,348.24 352.0,348.25 352.2,348.25 352.5,348.25 352.8,348.25 353.0,348.25 353.2,348.25 353.5,348.25 353.8,348.25 354.0,348.25 354.2,348.25 354.5,348.25 354.8,348.25 355.0,348.25 355.2,348.26 355.5,348.26 355.8,348.26 356.0,348.26 356.2,348.26 356.5,348.26 356.8,348.26 357.0,348.26 357.2,348.26 357.5,348.26 357.8,348.26 358.0,348.27 358.2,348.27 358.5,348.27 358.8,348.27 359.0,348.27 359.2,348.27 359.5,348.27 359.8,348.27 360.0,348.27 360.2,348.27 360.5,348.27 360.8,348.28 361.0,348.28 361.2,348.28 361.5,348.28 361.8,348.28 362.0,348.28 362.2,348.28 362.5,348.28 362.8,348.28 363.0,348.28 363.2,348.29 363.5,348.29 363.8,348.29 364.0,348.29 364.2,348.29 364.5,348.29 364.8,348.29 365.0,348.29 365.2,348.29 365.5,348.29 365.8,348.30 366.0,348.30 366.2,348.30 366.5,348.30 366.8,348.30 367.0,348.30 367.2,348.30 367.5,348.30 367.8,348.30 368.0,348.31 368.2,348.31 368.5,348.31 368.8,348.31 369.0,348.31 369.2,348.31 369.5,348.31 369.8,348.31 370.0,348.31 370.2,348.32 370.5,348.32 370.8,348.32 371.0,348.32 371.2,348.32 371.5,348.32 371.8,348.32 372.0,348.32 372.2,348.33 372.5,348.33 372.8,348.33 373.0,348.33 373.2,348.33 373.5,348.33 373.8,348.33 374.0,348.33 374.2,348.34 374.5,348.34 374.8,348.34 375.0,348.34 375.2,348.34 375.5,348.34 375.8,348.34 376.0,348.35 376.2,348.35 376.5,348.35 376.8,348.35 377.0,348.35 377.2,348.35 377.5,348.35 377.8,348.36 378.0,348.36 378.2,348.36 378.5,348.36 378.8,348.36 379.0,348.36 379.2,348.36 379.5,348.37 379.8,348.37 380.0,348.37 380.2,348.37 380.5,348.37 380.8,348.37 381.0,348.38 381.2,348.38 381.5,348.38 381.8,348.38 382.0,348.38 382.2,348.38 382.5,348.38 382.8,348.39 383.0,348.39 383.2,348.39 383.5,348.39 383.8,348.39 384.0,348.40 384.2,348.40 384.5,348.40 384.8,348.40 385.0,348.40 385.2,348.40 385.5,348.41 385.8,348.41 386.0,348.41 386.2,348.41 386.5,348.41 386.8,348.41 387.0,348.42 387.2,348.42 387.5,348.42 387.8,348.42 388.0,348.42 388.2,348.43 388.5,348.43 388.8,348.43 389.0,348.43 389.2,348.43 389.5,348.44 389.8,348.44 390.0,348.44 390.2,348.44 390.5,348.45 390.8,348.45 391.0,348.45 391.2,348.45 391.5,348.45 391.8,348.46 392.0,348.46 392.2,348.46 392.5,348.46 392.8,348.46 393.0,348.47 393.2,348.47 393.5,348.47 393.8,348.47 394.0,348.48 394.2,348.48 394.5,348.48 394.8,348.48 395.0,348.49 395.2,348.49 395.5,348.49 395.8,348.49 396.0,348.50 396.2,348.50 396.5,348.50 396.8,348.50 397.0,348.51 397.2,348.51 397.5,348.51 397.8,348.52 398.0,348.52 398.2,348.52 398.5,348.52 398.8,348.53 399.0,348.53 399.2,348.53 399.5,348.54 399.8,348.54 400.0,348.54 400.2,348.54 400.5,348.55 400.8,348.55 401.0,348.55 401.2,348.56 401.5,348.56 401.8,348.56 402.0,348.57 402.2,348.57 402.5,348.57 402.8,348.58 403.0,348.58 403.2,348.58 403.5,348.59 403.8,348.59 404.0,348.59 404.2,348.60 404.5,348.60 404.8,348.60 405.0,348.61 405.2,348.61 405.5,348.62 405.8,348.62 406.0,348.62 406.2,348.63 406.5,348.63 406.8,348.63 407.0,348.64 407.2,348.64 407.5,348.65 407.8,348.65 408.0,348.66 408.2,348.66 408.5,348.66 408.8,348.67 409.0,348.67 409.2,348.68 409.5,348.68 409.8,348.69 410.0,348.69 410.2,348.70 410.5,348.70 410.8,348.71 411.0,348.71 411.2,348.72 411.5,348.72 411.8,348.73 412.0,348.73 412.2,348.74 412.5,348.74 412.8,348.75 413.0,348.75 413.2,348.76 413.5,348.76 413.8,348.77 414.0,348.77 414.2,348.78 414.5,348.79 414.8,348.79 415.0,348.80 415.2,348.80 415.5,348.81 415.8,348.82 416.0,348.82 416.2,348.83 416.5,348.84 416.8,348.84 417.0,348.85 417.2,348.86 417.5,348.87 417.8,348.87 418.0,348.88 418.2,348.89 418.5,348.90 418.8,348.90 419.0,348.91 419.2,348.92 419.5,348.93 419.8,348.94 420.0,348.95 420.2,348.95 420.5,348.96 420.8,348.97 421.0,348.98 421.2,348.99 421.5,349.00 421.8,349.01 422.0,349.02 422.2,349.03 422.5,349.04 422.8,349.05 423.0,349.06 423.2,349.07 423.5,349.08 423.8,349.10 424.0,349.11 424.2,349.12 424.5,349.13 424.8,349.14 425.0,349.16 425.2,349.17 425.5,349.18 425.8,349.20 426.0,349.21 426.2,349.23 426.5,349.24 426.8,349.26 427.0,349.27 427.2,349.29 427.5,349.30 427.8,349.32 428.0,349.34 428.2,349.35 428.5,349.37 428.8,349.39 429.0,349.41 429.2,349.43 429.5,349.45 429.8,349.47 430.0,349.49 430.2,349.51 430.5,349.54 430.8,349.56 431.0,349.58 431.2,349.61 431.5,349.63 431.8,349.66 432.0,349.68 432.2,349.71 432.5,349.74 432.8,349.77 433.0,349.80 433.2,349.83 433.5,349.86 433.8,349.89 434.0,349.93 434.2,349.96 434.5,350.00 434.8,350.04 435.0,350.07 435.2,350.11 435.5,350.16 435.8,350.20 436.0,350.24 436.2,350.29 436.5,350.33 436.8,350.38 437.0,350.43 437.2,350.49 437.5,350.54 437.8,350.60 438.0,350.66 438.2,350.72 438.5,350.78 438.8,350.84 439.0,350.91 439.2,350.98 439.5,351.05 439.8,351.13 440.0,351.21 440.2,351.29 440.5,351.38 440.8,351.46 441.0,351.56 441.2,351.65 441.5,351.75 441.8,351.85 442.0,351.96 442.2,352.07 442.5,352.19 442.8,352.31 443.0,352.44 443.2,352.57 443.5,352.70 443.8,352.85 444.0,353.00 444.2,353.15 444.5,353.31 444.8,353.48 445.0,353.65 445.2,353.84 445.5,354.03 445.8,354.23 446.0,354.43 446.2,354.65 446.5,354.87 446.8,355.11 447.0,355.35 447.2,355.61 447.5,355.87 447.8,356.15 448.0,356.44 448.2,356.74 448.5,357.05 448.8,357.38 449.0,357.72 449.2,358.07 449.5,358.44 449.8,358.82 450.0,359.23 450.2,359.64 450.5,360.07 450.8,360.53 451.0,360.99 451.2,361.48 451.5,361.99 451.8,362.52 452.0,363.06 452.2,363.63 452.5,364.22 452.8,364.83 453.0,365.46 453.2,366.12 453.5,366.80 453.8,367.51 454.0,368.23 454.2,368.99 454.5,369.77 454.8,370.58 455.0,371.41 455.2,372.27 455.5,373.16 455.8,374.08 456.0,375.02 456.2,375.99 456.5,377.00 456.8,378.03 457.0,379.09 457.2,380.19 457.5,381.31 457.8,382.46 458.0,383.65 458.2,384.87 458.5,386.12 458.8,387.40 459.0,388.72 459.2,390.07 459.5,391.46 459.8,392.88 460.0,394.33 460.2,395.82 460.5,397.34 460.8,398.91 461.0,400.50 461.2,402.14 461.5,403.82 461.8,405.53 462.0,407.29 462.2,409.08 462.5,410.92 462.8,412.80 463.0,414.73 463.2,416.70 463.5,418.71 463.8,420.78 464.0,422.89 464.2,425.05 464.5,427.26 464.8,429.53 465.0,431.84 465.2,434.21 465.5,436.63 465.8,439.10 466.0,441.63 466.2,444.20 466.5,446.82 466.8,449.47 467.0,452.16 467.2,454.87 467.5,457.59 467.8,460.29 468.0,462.97 468.2,465.58 468.5,468.09 468.8,470.47 469.0,472.67 469.2,474.65 469.5,476.38 469.8,477.80 470.0,478.92 470.2,479.72 470.5,480.22 470.8,480.45 471.0,480.43 471.2,480.21 471.5,479.84 471.8,479.35 472.0,478.79 472.2,478.19 472.5,477.58 472.8,476.96 473.0,476.38 473.2,475.83 473.5,475.32 473.8,474.87 474.0,474.48 474.2,474.15 474.5,473.89 474.8,473.70 475.0,473.58 475.2,473.53 475.5,473.55 475.8,473.65 476.0,473.82 476.2,474.06 476.5,474.39 476.8,474.79 477.0,475.27 477.2,475.83 477.5,476.47 477.8,477.20 478.0,478.01 478.2,478.92 478.5,479.92 478.8,481.01 479.0,482.21 479.2,483.51 479.5,484.93 479.8,486.46 480.0,488.11 480.2,489.88 480.5,491.78 480.8,493.81 481.0,495.97 481.2,498.26 481.5,500.64 481.8,503.11 482.0,505.60 482.2,508.04 482.5,510.31 482.8,512.27 483.0,513.73 483.2,514.49 483.5,514.42 483.8,513.48 484.0,511.73 484.2,509.32 484.5,506.45 484.8,503.29 485.0,499.99 485.2,496.65 485.5,493.35 485.8,490.13 486.0,487.01 486.2,484.00 486.5,481.12 486.8,478.35 487.0,475.70 487.2,473.17 487.5,470.74 487.8,468.41 488.0,466.17 488.2,464.03 488.5,461.96 488.8,459.98 489.0,458.07 489.2,456.23 489.5,454.45 489.8,452.73 490.0,451.08 490.2,449.47 490.5,447.92 490.8,446.41 491.0,444.96 491.2,443.54 491.5,442.17 491.8,440.83 492.0,439.54 492.2,438.28 492.5,437.05 492.8,435.85 493.0,434.69 493.2,433.56 493.5,432.45 493.8,431.37 494.0,430.32 494.2,429.30 494.5,428.29 494.8,427.31 495.0,426.36 495.2,425.42 495.5,424.51 495.8,423.62 496.0,422.74 496.2,421.89 496.5,421.05 496.8,420.23 497.0,419.43 497.2,418.64 497.5,417.87 497.8,417.11 498.0,416.37 498.2,415.65 498.5,414.94 498.8,414.24 499.0,413.55 499.2,412.88 499.5,412.22 499.8,411.58 500.0,410.94 500.2,410.32 500.5,409.71 500.8,409.11 501.0,408.52 501.2,407.94 501.5,407.37 501.8,406.81 502.0,406.26 502.2,405.72 502.5,405.19 502.8,404.67 503.0,404.16 503.2,403.65 503.5,403.16 503.8,402.67 504.0,402.19 504.2,401.72 504.5,401.26 504.8,400.80 505.0,400.35 505.2,399.91 505.5,399.48 505.8,399.05 506.0,398.63 506.2,398.22 506.5,397.81 506.8,397.41 507.0,397.01 507.2,396.63 507.5,396.24 507.8,395.87 508.0,395.50 508.2,395.13 508.5,394.77 508.8,394.42 509.0,394.07 509.2,393.73 509.5,393.39 509.8,393.05 510.0,392.73 510.2,392.40 510.5,392.08 510.8,391.77 511.0,391.46 511.2,391.16 511.5,390.86 511.8,390.56 512.0,390.27 512.2,389.98 512.5,389.70 512.8,389.42 513.0,389.14 513.2,388.87 513.5,388.60 513.8,388.34 514.0,388.08 514.2,387.82 514.5,387.57 514.8,387.32 515.0,387.08 515.2,386.84 515.5,386.60 515.8,386.36 516.0,386.13 516.2,385.90 516.5,385.67 516.8,385.45 517.0,385.23 517.2,385.02 517.5,384.80 517.8,384.59 518.0,384.38 518.2,384.18 518.5,383.98 518.8,383.78 519.0,383.58 519.2,383.39 519.5,383.20 519.8,383.01 520.0,382.82 520.2,382.64 520.5,382.46 520.8,382.28 521.0,382.10 521.2,381.93 521.5,381.75 521.8,381.59 522.0,381.42 522.2,381.25 522.5,381.09 522.8,380.93 523.0,380.77 523.2,380.61 523.5,380.46 523.8,380.31 524.0,380.16 524.2,380.01 524.5,379.86 524.8,379.72 525.0,379.58 525.2,379.43 525.5,379.30 525.8,379.16 526.0,379.02 526.2,378.89 526.5,378.76 526.8,378.63 527.0,378.50 527.2,378.37 527.5,378.25 527.8,378.12 528.0,378.00 528.2,377.88 528.5,377.76 528.8,377.65 529.0,377.53 529.2,377.42 529.5,377.30 529.8,377.19 530.0,377.08 530.2,376.97 530.5,376.87 530.8,376.76 531.0,376.66 531.2,376.55 531.5,376.45 531.8,376.35 532.0,376.25 532.2,376.15 532.5,376.06 532.8,375.96 533.0,375.87 533.2,375.78 533.5,375.68 533.8,375.59 534.0,375.51 534.2,375.42 534.5,375.33 534.8,375.24 535.0,375.16 535.2,375.08 535.5,374.99 535.8,374.91 536.0,374.83 536.2,374.75 536.5,374.67 536.8,374.60 537.0,374.52 537.2,374.45 537.5,374.37 537.8,374.30 538.0,374.23 538.2,374.15 538.5,374.08 538.8,374.01 539.0,373.95 539.2,373.88 539.5,373.81 539.8,373.75 540.0,373.68 540.2,373.62 540.5,373.55 540.8,373.49 541.0,373.43 541.2,373.37 541.5,373.31 541.8,373.25 542.0,373.19 542.2,373.13 542.5,373.08 542.8,373.02 543.0,372.96 543.2,372.91 543.5,372.86 543.8,372.80 544.0,372.75 544.2,372.70 544.5,372.65 544.8,372.60 545.0,372.55 545.2,372.50 545.5,372.45 545.8,372.40 546.0,372.36 546.2,372.31 546.5,372.27 546.8,372.22 547.0,372.18 547.2,372.13 547.5,372.09 547.8,372.05 548.0,372.01 548.2,371.97 548.5,371.93 548.8,371.89 549.0,371.85 549.2,371.81 549.5,371.77 549.8,371.73 550.0,371.70 550.2,371.66 550.5,371.62 550.8,371.59 551.0,371.55 551.2,371.52 551.5,371.49 551.8,371.45 552.0,371.42 552.2,371.39 552.5,371.36 552.8,371.33 553.0,371.30 553.2,371.27 553.5,371.24 553.8,371.21 554.0,371.18 554.2,371.15 554.5,371.12 554.8,371.10 555.0,371.07 555.2,371.04 555.5,371.02 555.8,370.99 556.0,370.97 556.2,370.95 556.5,370.92 556.8,370.90 557.0,370.88 557.2,370.85 557.5,370.83 557.8,370.81 558.0,370.79 558.2,370.77 558.5,370.75 558.8,370.73 559.0,370.71 559.2,370.69 559.5,370.67 559.8,370.65 560.0,370.63 560.2,370.62 560.5,370.60 560.8,370.58 561.0,370.57 561.2,370.55 561.5,370.53 561.8,370.52 562.0,370.50 562.2,370.49 562.5,370.48 562.8,370.46 563.0,370.45 563.2,370.43 563.5,370.42 563.8,370.41 564.0,370.40 564.2,370.39 564.5,370.38 564.8,370.36 565.0,370.35 565.2,370.34 565.5,370.33 565.8,370.32 566.0,370.31 566.2,370.31 566.5,370.30 566.8,370.29 567.0,370.28 567.2,370.27 567.5,370.27 567.8,370.26 568.0,370.25 568.2,370.24 568.5,370.24 568.8,370.23 569.0,370.23 569.2,370.22 569.5,370.22 569.8,370.21 570.0,370.21 570.2,370.20 570.5,370.20 570.8,370.20 571.0,370.19 571.2,370.19 571.5,370.19 571.8,370.19 572.0,370.18 572.2,370.18 572.5,370.18 572.8,370.18 573.0,370.18 573.2,370.18 573.5,370.18 573.8,370.18 574.0,370.18 574.2,370.18 574.5,370.18 574.8,370.18 575.0,370.18 575.2,370.18 575.5,370.18 575.8,370.18 576.0,370.19 576.2,370.19 576.5,370.19 576.8,370.19 577.0,370.20 577.2,370.20 577.5,370.20 577.8,370.21 578.0,370.21 578.2,370.22 578.5,370.22 578.8,370.22 579.0,370.23 579.2,370.23 579.5,370.24 579.8,370.25 580.0,370.25 580.2,370.26 580.5,370.26 580.8,370.27 581.0,370.28 581.2,370.28 581.5,370.29 581.8,370.30 582.0,370.31 582.2,370.31 582.5,370.32 582.8,370.33 583.0,370.34 583.2,370.35 583.5,370.36 583.8,370.37 584.0,370.37 584.2,370.38 584.5,370.39 584.8,370.40 585.0,370.41 585.2,370.42 585.5,370.44 585.8,370.45 586.0,370.46 586.2,370.47 586.5,370.48 586.8,370.49 587.0,370.50 587.2,370.51 587.5,370.53 587.8,370.54 588.0,370.55 588.2,370.56 588.5,370.58 588.8,370.59 589.0,370.60 589.2,370.62 589.5,370.63 589.8,370.64 590.0,370.66 590.2,370.67 590.5,370.69 590.8,370.70 591.0,370.72 591.2,370.73 591.5,370.75 591.8,370.76 592.0,370.78 592.2,370.79 592.5,370.81 592.8,370.82 593.0,370.84 593.2,370.86 593.5,370.87 593.8,370.89 594.0,370.91 594.2,370.92 594.5,370.94 594.8,370.96 595.0,370.98 595.2,370.99 595.5,371.01 595.8,371.03 596.0,371.05 596.2,371.07 596.5,371.08 596.8,371.10 597.0,371.12 597.2,371.14 597.5,371.16 597.8,371.18 598.0,371.20 598.2,371.22 598.5,371.24 598.8,371.26 599.0,371.28 599.2,371.30 599.5,371.32 599.8,371.34 600.0,371.36 600.2,371.38 600.5,371.40 600.8,371.42 601.0,371.45 601.2,371.47 601.5,371.49 601.8,371.51 602.0,371.53 602.2,371.55 602.5,371.58 602.8,371.60 603.0,371.62 603.2,371.64 603.5,371.67 603.8,371.69 604.0,371.71 604.2,371.74 604.5,371.76 604.8,371.78 605.0,371.81 605.2,371.83 605.5,371.86 605.8,371.88 606.0,371.90 606.2,371.93 606.5,371.95 606.8,371.98 607.0,372.00 607.2,372.03 607.5,372.05 607.8,372.08 608.0,372.10 608.2,372.13 608.5,372.15 608.8,372.18 609.0,372.21 609.2,372.23 609.5,372.26 609.8,372.29 610.0,372.31 610.2,372.34 610.5,372.37 610.8,372.39 611.0,372.42 611.2,372.45 611.5,372.47 611.8,372.50 612.0,372.53 612.2,372.56 612.5,372.58 612.8,372.61 613.0,372.64 613.2,372.67 613.5,372.70 613.8,372.73 614.0,372.75 614.2,372.78 614.5,372.81 614.8,372.84 615.0,372.87 615.2,372.90 615.5,372.93 615.8,372.96 616.0,372.99 616.2,373.02 616.5,373.05 616.8,373.08 617.0,373.11 617.2,373.14 617.5,373.17 617.8,373.20 618.0,373.23 618.2,373.26 618.5,373.29 618.8,373.32 619.0,373.35 619.2,373.39 619.5,373.42 619.8,373.45 620.0,373.48 620.2,373.51 620.5,373.54 620.8,373.58 621.0,373.61 621.2,373.64 621.5,373.67 621.8,373.70 622.0,373.74 622.2,373.77 622.5,373.80 622.8,373.84 623.0,373.87 623.2,373.90 623.5,373.94 623.8,373.97 624.0,374.00 624.2,374.04 624.5,374.07 624.8,374.10 625.0,374.14 625.2,374.17 625.5,374.21 625.8,374.24 626.0,374.27 626.2,374.31 626.5,374.34 626.8,374.38 627.0,374.41 627.2,374.45 627.5,374.48 627.8,374.52 628.0,374.55 628.2,374.59 628.5,374.62 628.8,374.66 629.0,374.70 629.2,374.73 629.5,374.77 629.8,374.80 630.0,374.84 630.2,374.88 630.5,374.91 630.8,374.95 631.0,374.99 631.2,375.02 631.5,375.06 631.8,375.10 632.0,375.13 632.2,375.17 632.5,375.21 632.8,375.25 633.0,375.28 633.2,375.32 633.5,375.36 633.8,375.40 634.0,375.43 634.2,375.47 634.5,375.51 634.8,375.55 635.0,375.59 635.2,375.62 635.5,375.66 635.8,375.70 636.0,375.74 636.2,375.78 636.5,375.82 636.8,375.86 637.0,375.90 637.2,375.94 637.5,375.98 637.8,376.01 638.0,376.05 638.2,376.09 638.5,376.13 638.8,376.17 639.0,376.21 639.2,376.25 639.5,376.29 639.8,376.33 640.0,376.37 640.2,376.41 640.5,376.45 640.8,376.50 641.0,376.54 641.2,376.58 641.5,376.62 641.8,376.66 642.0,376.70 642.2,376.74 642.5,376.78 642.8,376.82 643.0,376.87 643.2,376.91 643.5,376.95 643.8,376.99 644.0,377.03 644.2,377.07 644.5,377.12 644.8,377.16 645.0,377.20 645.2,377.24 645.5,377.29 645.8,377.33 646.0,377.37 646.2,377.41 646.5,377.46 646.8,377.50 647.0,377.54 647.2,377.58 647.5,377.63 647.8,377.67 648.0,377.71 648.2,377.76 648.5,377.80 648.8,377.84 649.0,377.89 649.2,377.93 649.5,377.98 649.8,378.02 650.0,378.06 650.2,378.11 650.5,378.15 650.8,378.20 651.0,378.24 651.2,378.29 651.5,378.33 651.8,378.38 652.0,378.42 652.2,378.46 652.5,378.51 652.8,378.55 653.0,378.60 653.2,378.65 653.5,378.69 653.8,378.74 654.0,378.78 654.2,378.83 654.5,378.87 654.8,378.92 655.0,378.96 655.2,379.01 655.5,379.06 655.8,379.10 656.0,379.15 656.2,379.19 656.5,379.24 656.8,379.29 657.0,379.33 657.2,379.38 657.5,379.43 657.8,379.47 658.0,379.52 658.2,379.57 658.5,379.61 658.8,379.66 659.0,379.71 659.2,379.76 659.5,379.80 659.8,379.85 660.0,379.90 660.2,379.95 660.5,379.99 660.8,380.04 661.0,380.09 661.2,380.14 661.5,380.18 661.8,380.23 662.0,380.28 662.2,380.33 662.5,380.38 662.8,380.43 663.0,380.47 663.2,380.52 663.5,380.57 663.8,380.62 664.0,380.67 664.2,380.72 664.5,380.77 664.8,380.82 665.0,380.86 665.2,380.91 665.5,380.96 665.8,381.01 666.0,381.06 666.2,381.11 666.5,381.16 666.8,381.21 667.0,381.26 667.2,381.31 667.5,381.36 667.8,381.41 668.0,381.46 668.2,381.51 668.5,381.56 668.8,381.61 669.0,381.66 669.2,381.71 669.5,381.76 669.8,381.81 670.0,381.86 670.2,381.91 670.5,381.96 670.8,382.01 671.0,382.07 671.2,382.12 671.5,382.17 671.8,382.22 672.0,382.27 672.2,382.32 672.5,382.37 672.8,382.42 673.0,382.47 673.2,382.53 673.5,382.58 673.8,382.63 674.0,382.68 674.2,382.73 674.5,382.79 674.8,382.84 675.0,382.89" stroke="#7470CC"/>
<polyline points="253.0,586.73 253.2,586.71 253.5,586.69 253.8,586.66 254.0,586.64 254.2,586.62 254.5,586.59 254.8,586.57 255.0,586.55 255.2,586.53 255.5,586.51 255.8,586.48 256.0,586.46 256.2,586.44 256.5,586.42 256.8,586.40 257.0,586.38 257.2,586.36 257.5,586.34 257.8,586.32 258.0,586.30 258.2,586.29 258.5,586.27 258.8,586.25 259.0,586.23 259.2,586.21 259.5,586.20 259.8,586.18 260.0,586.16 260.2,586.15 260.5,586.13 260.8,586.11 261.0,586.10 261.2,586.08 261.5,586.07 261.8,586.05 262.0,586.04 262.2,586.03 262.5,586.01 262.8,586.00 263.0,585.99 263.2,585.97 263.5,585.96 263.8,585.95 264.0,585.94 264.2,585.93 264.5,585.92 264.8,585.91 265.0,585.90 265.2,585.89 265.5,585.88 265.8,585.87 266.0,585.86 266.2,585.85 266.5,585.84 266.8,585.83 267.0,585.83 267.2,585.82 267.5,585.81 267.8,585.80 268.0,585.80 268.2,585.79 268.5,585.79 268.8,585.78 269.0,585.78 269.2,585.77 269.5,585.77 269.8,585.77 270.0,585.76 270.2,585.76 270.5,585.76 270.8,585.76 271.0,585.75 271.2,585.75 271.5,585.75 271.8,585.75 272.0,585.75 272.2,585.75 272.5,585.75 272.8,585.75 273.0,585.76 273.2,585.76 273.5,585.76 273.8,585.76 274.0,585.77 274.2,585.77 274.5,585.77 274.8,585.78 275.0,585.78 275.2,585.79 275.5,585.80 275.8,585.80 276.0,585.81 276.2,585.82 276.5,585.82 276.8,585.83 277.0,585.84 277.2,585.85 277.5,585.86 277.8,585.87 278.0,585.88 278.2,585.89 278.5,585.90 278.8,585.92 279.0,585.93 279.2,585.94 279.5,585.95 279.8,585.97 280.0,585.98 280.2,586.00 280.5,586.01 280.8,586.03 281.0,586.05 281.2,586.06 281.5,586.08 281.8,586.10 282.0,586.12 282.2,586.14 282.5,586.16 282.8,586.18 283.0,586.20 283.2,586.22 283.5,586.24 283.8,586.26 284.0,586.29 284.2,586.31 284.5,586.33 284.8,586.36 285.0,586.38 285.2,586.41 285.5,586.44 285.8,586.46 286.0,586.49 286.2,586.52 286.5,586.55 286.8,586.58 287.0,586.61 287.2,586.64 287.5,586.67 287.8,586.70 288.0,586.74 288.2,586.77 288.5,586.80 288.8,586.84 289.0,586.87 289.2,586.91 289.5,586.95 289.8,586.98 290.0,587.02 290.2,587.06 290.5,587.10 290.8,587.14 291.0,587.18 291.2,587.22 291.5,587.27 291.8,587.31 292.0,587.35 292.2,587.40 292.5,587.44 292.8,587.49 293.0,587.54 293.2,587.58 293.5,587.63 293.8,587.68 294.0,587.73 294.2,587.78 294.5,587.83 294.8,587.89 295.0,587.94 295.2,587.99 295.5,588.05 295.8,588.10 296.0,588.16 296.2,588.22 296.5,588.27 296.8,588.33 297.0,588.39 297.2,588.45 297.5,588.52 297.8,588.58 298.0,588.64 298.2,588.71 298.5,588.77 298.8,588.84 299.0,588.91 299.2,588.97 299.5,589.04 299.8,589.11 300.0,589.19 300.2,589.26 300.5,589.33 300.8,589.40 301.0,589.48 301.2,589.56 301.5,589.63 301.8,589.71 302.0,589.79 302.2,589.87 302.5,589.95 302.8,590.04 303.0,590.12 303.2,590.20 303.5,590.29 303.8,590.38 304.0,590.46 304.2,590.55 304.5,590.64 304.8,590.74 305.0,590.83 305.2,590.92 305.5,591.02 305.8,591.12 306.0,591.21 306.2,591.31 306.5,591.41 306.8,591.51 307.0,591.62 307.2,591.72 307.5,591.83 307.8,591.93 308.0,592.04 308.2,592.15 308.5,592.26 308.8,592.38 309.0,592.49 309.2,592.60 309.5,592.72 309.8,592.84 310.0,592.96 310.2,593.08 310.5,593.20 310.8,593.33 311.0,593.45 311.2,593.58 311.5,593.71 311.8,593.84 312.0,593.97 312.2,594.11 312.5,594.24 312.8,594.38 313.0,594.52 313.2,594.66 313.5,594.80 313.8,594.95 314.0,595.09 314.2,595.24 314.5,595.39 314.8,595.54 315.0,595.70 315.2,595.85 315.5,596.01 315.8,596.17 316.0,596.33 316.2,596.49 316.5,596.66 316.8,596.83 317.0,597.00 317.2,597.17 317.5,597.34 317.8,597.52 318.0,597.70 318.2,597.88 318.5,598.06 318.8,598.25 319.0,598.43 319.2,598.62 319.5,598.82 319.8,599.01 320.0,599.21 320.2,599.41 320.5,599.61 320.8,599.82 321.0,600.03 321.2,600.24 321.5,600.45 321.8,600.67 322.0,600.88 322.2,601.11 322.5,601.33 322.8,601.56 323.0,601.79 323.2,602.02 323.5,602.26 323.8,602.50 324.0,602.74 324.2,602.99 324.5,603.24 324.8,603.49 325.0,603.75 325.2,604.01 325.5,604.27 325.8,604.54 326.0,604.81 326.2,605.09 326.5,605.36 326.8,605.65 327.0,605.93 327.2,606.22 327.5,606.52 327.8,606.82 328.0,607.12 328.2,607.43 328.5,607.74 328.8,608.06 329.0,608.38 329.2,608.70 329.5,609.03 329.8,609.37 330.0,609.71 330.2,610.06 330.5,610.41 330.8,610.76 331.0,611.13 331.2,611.49 331.5,611.87 331.8,612.24 332.0,612.63 332.2,613.02 332.5,613.42 332.8,613.82 333.0,614.23 333.2,614.65 333.5,615.07 333.8,615.50 334.0,615.94 334.2,616.39 334.5,616.84 334.8,617.30 335.0,617.77 335.2,618.25 335.5,618.74 335.8,619.23 336.0,619.73 336.2,620.25 336.5,620.77 336.8,621.30 337.0,621.85 337.2,622.40 337.5,622.96 337.8,623.54 338.0,624.12 338.2,624.72 338.5,625.33 338.8,625.95 339.0,626.59 339.2,627.24 339.5,627.90 339.8,628.58 340.0,629.27 340.2,629.98 340.5,630.70 340.8,631.45 341.0,632.20 341.2,632.98 341.5,633.78 341.8,634.59 342.0,635.43 342.2,636.29 342.5,637.17 342.8,638.07 343.0,639.00 343.2,639.95 343.5,640.93 343.8,641.95 344.0,642.99 344.2,644.06 344.5,645.16 344.8,646.30 345.0,647.48 345.2,648.70 345.5,649.96 345.8,651.26 346.0,652.61 346.2,654.02 346.5,655.47 346.8,656.99 347.0,658.56 347.2,660.21 347.5,661.92 347.8,663.72 348.0,665.60 348.2,667.57 348.5,669.64 348.8,670.00 349.0,670.00 349.2,670.00 349.5,670.00 349.8,670.00 350.0,670.00 350.2,670.00 350.5,670.00 350.8,670.00 351.0,670.00 351.2,670.00 351.5,670.00 351.8,670.00 352.0,670.00 352.2,670.00 352.5,670.00 352.8,670.00 353.0,670.00 353.2,670.00 353.5,670.00 353.8,670.00 354.0,670.00 354.2,670.00 354.5,670.00 354.8,670.00 355.0,670.00 355.2,670.00 355.5,670.00 355.8,670.00 356.0,670.00 356.2,670.00 356.5,670.00 356.8,668.96 357.0,666.77 357.2,664.69 357.5,662.69 357.8,660.79 358.0,658.97 358.2,657.22 358.5,655.54 358.8,653.92 359.0,652.37 359.2,650.87 359.5,649.42 359.8,648.02 360.0,646.67 360.2,645.37 360.5,644.10 360.8,642.87 361.0,641.68 361.2,640.53 361.5,639.41 361.8,638.32 362.0,637.26 362.2,636.23 362.5,635.23 362.8,634.25 363.0,633.30 363.2,632.37 363.5,631.47 363.8,630.58 364.0,629.72 364.2,628.88 364.5,628.06 364.8,627.26 365.0,626.48 365.2,625.72 365.5,624.97 365.8,624.24 366.0,623.53 366.2,622.83 366.5,622.15 366.8,621.48 367.0,620.83 367.2,620.19 367.5,619.56 367.8,618.95 368.0,618.36 368.2,617.77 368.5,617.20 368.8,616.64 369.0,616.10 369.2,615.56 369.5,615.04 369.8,614.53 370.0,614.03 370.2,613.54 370.5,613.06 370.8,612.60 371.0,612.14 371.2,611.70 371.5,611.27 371.8,610.84 372.0,610.43 372.2,610.03 372.5,609.63 372.8,609.25 373.0,608.88 373.2,608.52 373.5,608.17 373.8,607.82 374.0,607.49 374.2,607.17 374.5,606.86 374.8,606.55 375.0,606.26 375.2,605.98 375.5,605.71 375.8,605.44 376.0,605.19 376.2,604.95 376.5,604.71 376.8,604.49 377.0,604.28 377.2,604.08 377.5,603.88 377.8,603.70 378.0,603.53 378.2,603.37 378.5,603.22 378.8,603.08 379.0,602.95 379.2,602.84 379.5,602.73 379.8,602.64 380.0,602.56 380.2,602.49 380.5,602.43 380.8,602.38 381.0,602.35 381.2,602.33 381.5,602.32 381.8,602.33 382.0,602.35 382.2,602.38 382.5,602.43 382.8,602.50 383.0,602.58 383.2,602.67 383.5,602.78 383.8,602.91 384.0,603.05 384.2,603.22 384.5,603.40 384.8,603.60 385.0,603.82 385.2,604.06 385.5,604.32 385.8,604.60 386.0,604.91 386.2,605.23 386.5,605.59 386.8,605.97 387.0,606.38 387.2,606.81 387.5,607.28 387.8,607.77 388.0,608.30 388.2,608.86 388.5,609.46 388.8,610.10 389.0,610.78 389.2,611.50 389.5,612.27 389.8,613.08 390.0,613.95 390.2,614.87 390.5,615.85 390.8,616.90 391.0,618.01 391.2,619.20 391.5,620.46 391.8,621.81 392.0,623.26 392.2,624.80 392.5,626.46 392.8,628.23 393.0,630.13 393.2,632.18 393.5,634.37 393.8,636.74 394.0,639.27 394.2,641.99 394.5,644.88 394.8,647.94 395.0,651.11 395.2,654.31 395.5,657.38 395.8,660.07 396.0,662.01 396.2,662.83 396.5,662.28 396.8,660.33 397.0,657.25 397.2,653.42 397.5,649.18 397.8,644.81 398.0,640.46 398.2,636.22 398.5,632.15 398.8,628.25 399.0,624.53 399.2,620.99 399.5,617.61 399.8,614.38 400.0,611.30 400.2,608.34 400.5,605.51 400.8,602.78 401.0,600.15 401.2,597.62 401.5,595.17 401.8,592.80 402.0,590.50 402.2,588.27 402.5,586.10 402.8,583.99 403.0,581.93 403.2,579.93 403.5,577.97 403.8,576.06 404.0,574.19 404.2,572.36 404.5,570.56 404.8,568.81 405.0,567.08 405.2,565.39 405.5,563.72 405.8,562.08 406.0,560.47 406.2,558.89 406.5,557.33 406.8,555.79 407.0,554.28 407.2,552.78 407.5,551.31 407.8,549.86 408.0,548.42 408.2,547.00 408.5,545.60 408.8,544.21 409.0,542.84 409.2,541.49 409.5,540.15 409.8,538.82 410.0,537.51 410.2,536.21 410.5,534.92 410.8,533.64 411.0,532.38 411.2,531.12 411.5,529.88 411.8,528.65 412.0,527.43 412.2,526.21 412.5,525.01 412.8,523.81 413.0,522.63 413.2,521.45 413.5,520.28 413.8,519.12 414.0,517.96 414.2,516.82 414.5,515.68 414.8,514.54 415.0,513.42 415.2,512.30 415.5,511.19 415.8,510.08 416.0,508.98 416.2,507.88 416.5,506.79 416.8,505.71 417.0,504.63 417.2,503.56 417.5,502.49 417.8,501.43 418.0,500.37 418.2,499.31 418.5,498.26 418.8,497.22 419.0,496.17 419.2,495.14 419.5,494.10 419.8,493.07 420.0,492.05 420.2,491.03 420.5,490.01 420.8,488.99 421.0,487.98 421.2,486.97 421.5,485.96 421.8,484.96 422.0,483.96 422.2,482.96 422.5,481.97 422.8,480.98 423.0,479.99 423.2,479.00 423.5,478.02 423.8,477.04 424.0,476.06 424.2,475.08 424.5,474.10 424.8,473.13 425.0,472.16 425.2,471.19 425.5,470.22 425.8,469.26 426.0,468.29 426.2,467.33 426.5,466.37 426.8,465.41 427.0,464.45 427.2,463.50 427.5,462.54 427.8,461.59 428.0,460.64 428.2,459.69 428.5,458.74 428.8,457.79 429.0,456.84 429.2,455.90 429.5,454.95 429.8,454.01 430.0,453.06 430.2,452.12 430.5,451.18 430.8,450.24 431.0,449.30 431.2,448.36 431.5,447.42 431.8,446.48 432.0,445.54 432.2,444.61 432.5,443.67 432.8,442.74 433.0,441.80 433.2,440.87 433.5,439.93 433.8,439.00 434.0,438.06 434.2,437.13 434.5,436.20 434.8,435.26 435.0,434.33 435.2,433.40 435.5,432.47 435.8,431.54 436.0,430.61 436.2,429.67 436.5,428.74 436.8,427.81 437.0,426.88 437.2,425.95 437.5,425.02 437.8,424.09 438.0,423.16 438.2,422.24 438.5,421.31 438.8,420.38 439.0,419.45 439.2,418.52 439.5,417.59 439.8,416.67 440.0,415.74 440.2,414.81 440.5,413.89 440.8,412.96 441.0,412.04 441.2,411.12 441.5,410.19 441.8,409.27 442.0,408.35 442.2,407.43 442.5,406.51 442.8,405.59 443.0,404.67 443.2,403.76 443.5,402.84 443.8,401.93 444.0,401.02 444.2,400.11 444.5,399.20 444.8,398.29 445.0,397.39 445.2,396.49 445.5,395.59 445.8,394.69 446.0,393.80 446.2,392.91 446.5,392.02 446.8,391.14 447.0,390.26 447.2,389.38 447.5,388.51 447.8,387.64 448.0,386.78 448.2,385.92 448.5,385.07 448.8,384.22 449.0,383.38 449.2,382.55 449.5,381.72 449.8,380.90 450.0,380.08 450.2,379.28 450.5,378.48 450.8,377.69 451.0,376.90 451.2,376.13 451.5,375.36 451.8,374.61 452.0,373.86 452.2,373.13 452.5,372.40 452.8,371.69 453.0,370.99 453.2,370.30 453.5,369.62 453.8,368.95 454.0,368.30 454.2,367.66 454.5,367.03 454.8,366.41 455.0,365.81 455.2,365.22 455.5,364.65 455.8,364.09 456.0,363.55 456.2,363.01 456.5,362.50 456.8,362.00 457.0,361.51 457.2,361.04 457.5,360.58 457.8,360.14 458.0,359.71 458.2,359.29 458.5,358.89 458.8,358.51 459.0,358.14 459.2,357.78 459.5,357.43 459.8,357.10 460.0,356.79 460.2,356.48 460.5,356.19 460.8,355.91 461.0,355.64 461.2,355.39 461.5,355.14 461.8,354.91 462.0,354.68 462.2,354.47 462.5,354.27 462.8,354.08 463.0,353.89 463.2,353.72 463.5,353.56 463.8,353.40 464.0,353.25 464.2,353.11 464.5,352.97 464.8,352.85 465.0,352.72 465.2,352.61 465.5,352.50 465.8,352.40 466.0,352.30 466.2,352.21 466.5,352.12 466.8,352.04 467.0,351.96 467.2,351.89 467.5,351.82 467.8,351.75 468.0,351.69 468.2,351.63 468.5,351.57 468.8,351.52 469.0,351.47 469.2,351.42 469.5,351.37 469.8,351.33 470.0,351.29 470.2,351.25 470.5,351.21 470.8,351.17 471.0,351.14 471.2,351.11 471.5,351.07 471.8,351.04 472.0,351.01 472.2,350.99 472.5,350.96 472.8,350.93 473.0,350.91 473.2,350.88 473.5,350.86 473.8,350.83 474.0,350.81 474.2,350.79 474.5,350.77 474.8,350.75 475.0,350.73 475.2,350.71 475.5,350.69 475.8,350.67 476.0,350.65 476.2,350.63 476.5,350.61 476.8,350.60 477.0,350.58 477.2,350.56 477.5,350.55 477.8,350.53 478.0,350.51 478.2,350.50 478.5,350.48 478.8,350.46 479.0,350.45 479.2,350.43 479.5,350.42 479.8,350.40 480.0,350.39 480.2,350.37 480.5,350.36 480.8,350.35 481.0,350.33 481.2,350.32 481.5,350.31 481.8,350.29 482.0,350.28 482.2,350.27 482.5,350.25 482.8,350.24 483.0,350.23 483.2,350.22 483.5,350.21 483.8,350.20 484.0,350.19 484.2,350.18 484.5,350.17 484.8,350.16 485.0,350.15 485.2,350.14 485.5,350.13 485.8,350.12 486.0,350.11 486.2,350.11 486.5,350.10 486.8,350.09 487.0,350.09 487.2,350.08 487.5,350.08 487.8,350.07 488.0,350.07 488.2,350.06 488.5,350.06 488.8,350.05 489.0,350.05 489.2,350.05 489.5,350.05 489.8,350.05 490.0,350.04 490.2,350.04 490.5,350.04 490.8,350.04 491.0,350.05 491.2,350.05 491.5,350.05 491.8,350.05 492.0,350.05 492.2,350.06 492.5,350.06 492.8,350.07 493.0,350.07 493.2,350.08 493.5,350.08 493.8,350.09 494.0,350.10 494.2,350.10 494.5,350.11 494.8,350.12 495.0,350.13 495.2,350.14 495.5,350.15 495.8,350.16 496.0,350.17 496.2,350.18 496.5,350.19 496.8,350.21 497.0,350.22 497.2,350.23 497.5,350.25 497.8,350.26 498.0,350.28 498.2,350.29 498.5,350.31 498.8,350.32 499.0,350.34 499.2,350.36 499.5,350.38 499.8,350.40 500.0,350.41 500.2,350.43 500.5,350.45 500.8,350.47 501.0,350.49 501.2,350.51 501.5,350.54 501.8,350.56 502.0,350.58 502.2,350.60 502.5,350.62 502.8,350.65 503.0,350.67 503.2,350.70 503.5,350.72 503.8,350.74 504.0,350.77 504.2,350.80 504.5,350.82 504.8,350.85 505.0,350.87 505.2,350.90 505.5,350.93 505.8,350.95 506.0,350.98 506.2,351.01 506.5,351.04 506.8,351.07 507.0,351.10 507.2,351.13 507.5,351.15 507.8,351.18 508.0,351.21 508.2,351.24 508.5,351.27 508.8,351.31 509.0,351.34 509.2,351.37 509.5,351.40 509.8,351.43 510.0,351.46 510.2,351.49 510.5,351.52 510.8,351.56 511.0,351.59 511.2,351.62 511.5,351.65 511.8,351.69 512.0,351.72 512.2,351.75 512.5,351.79 512.8,351.82 513.0,351.85 513.2,351.89 513.5,351.92 513.8,351.95 514.0,351.99 514.2,352.02 514.5,352.05 514.8,352.09 515.0,352.12 515.2,352.16 515.5,352.19 515.8,352.22 516.0,352.26 516.2,352.29 516.5,352.33 516.8,352.36 517.0,352.40 517.2,352.43 517.5,352.46 517.8,352.50 518.0,352.53 518.2,352.57 518.5,352.60 518.8,352.64 519.0,352.67 519.2,352.70 519.5,352.74 519.8,352.77 520.0,352.81 520.2,352.84 520.5,352.87 520.8,352.91 521.0,352.94 521.2,352.98 521.5,353.01 521.8,353.04 522.0,353.08 522.2,353.11 522.5,353.14 522.8,353.18 523.0,353.21 523.2,353.24 523.5,353.28 523.8,353.31 524.0,353.34 524.2,353.38 524.5,353.41 524.8,353.44 525.0,353.47 525.2,353.51 525.5,353.54 525.8,353.57 526.0,353.60 526.2,353.64 526.5,353.67 526.8,353.70 527.0,353.73 527.2,353.76 527.5,353.79 527.8,353.82 528.0,353.85 528.2,353.89 528.5,353.92 528.8,353.95 529.0,353.98 529.2,354.01 529.5,354.04 529.8,354.07 530.0,354.10 530.2,354.13 530.5,354.16 530.8,354.19 531.0,354.21 531.2,354.24 531.5,354.27 531.8,354.30 532.0,354.33 532.2,354.36 532.5,354.38 532.8,354.41 533.0,354.44 533.2,354.47 533.5,354.50 533.8,354.52 534.0,354.55 534.2,354.58 534.5,354.60 534.8,354.63 535.0,354.66 535.2,354.68 535.5,354.71 535.8,354.73 536.0,354.76 536.2,354.78 536.5,354.81 536.8,354.83 537.0,354.86 537.2,354.88 537.5,354.91 537.8,354.93 538.0,354.95 538.2,354.98 538.5,355.00 538.8,355.03 539.0,355.05 539.2,355.07 539.5,355.09 539.8,355.12 540.0,355.14 540.2,355.16 540.5,355.18 540.8,355.20 541.0,355.23 541.2,355.25 541.5,355.27 541.8,355.29 542.0,355.31 542.2,355.33 542.5,355.35 542.8,355.37 543.0,355.39 543.2,355.41 543.5,355.43 543.8,355.45 544.0,355.47 544.2,355.49 544.5,355.51 544.8,355.52 545.0,355.54 545.2,355.56 545.5,355.58 545.8,355.60 546.0,355.61 546.2,355.63 546.5,355.65 546.8,355.67 547.0,355.68 547.2,355.70 547.5,355.72 547.8,355.73 548.0,355.75 548.2,355.76 548.5,355.78 548.8,355.79 549.0,355.81 549.2,355.82 549.5,355.84 549.8,355.85 550.0,355.87 550.2,355.88 550.5,355.90 550.8,355.91 551.0,355.92 551.2,355.94 551.5,355.95 551.8,355.96 552.0,355.98 552.2,355.99 552.5,356.00 552.8,356.01 553.0,356.03 553.2,356.04 553.5,356.05 553.8,356.06 554.0,356.07 554.2,356.08 554.5,356.09 554.8,356.11 555.0,356.12 555.2,356.13 555.5,356.14 555.8,356.15 556.0,356.16 556.2,356.17 556.5,356.18 556.8,356.19 557.0,356.20 557.2,356.20 557.5,356.21 557.8,356.22 558.0,356.23 558.2,356.24 558.5,356.25 558.8,356.25 559.0,356.26 559.2,356.27 559.5,356.28 559.8,356.29 560.0,356.29 560.2,356.30 560.5,356.31 560.8,356.31 561.0,356.32 561.2,356.33 561.5,356.33 561.8,356.34 562.0,356.34 562.2,356.35 562.5,356.35 562.8,356.36 563.0,356.37 563.2,356.37 563.5,356.38 563.8,356.38 564.0,356.38 564.2,356.39 564.5,356.39 564.8,356.40 565.0,356.40 565.2,356.41 565.5,356.41 565.8,356.41 566.0,356.42 566.2,356.42 566.5,356.42 566.8,356.43 567.0,356.43 567.2,356.43 567.5,356.43 567.8,356.44 568.0,356.44 568.2,356.44 568.5,356.44 568.8,356.44 569.0,356.45 569.2,356.45 569.5,356.45 569.8,356.45 570.0,356.45 570.2,356.45 570.5,356.45 570.8,356.45 571.0,356.45 571.2,356.45 571.5,356.45 571.8,356.45 572.0,356.45 572.2,356.45 572.5,356.45 572.8,356.45 573.0,356.45 573.2,356.45 573.5,356.45 573.8,356.45 574.0,356.45 574.2,356.45 574.5,356.45 574.8,356.45 575.0,356.45 575.2,356.44 575.5,356.44 575.8,356.44 576.0,356.44 576.2,356.44 576.5,356.43 576.8,356.43 577.0,356.43 577.2,356.43 577.5,356.42 577.8,356.42 578.0,356.42 578.2,356.42 578.5,356.41 578.8,356.41 579.0,356.41 579.2,356.40 579.5,356.40 579.8,356.40 580.0,356.39 580.2,356.39 580.5,356.38 580.8,356.38 581.0,356.38 581.2,356.37 581.5,356.37 581.8,356.36 582.0,356.36 582.2,356.35 582.5,356.35 582.8,356.34 583.0,356.34 583.2,356.33 583.5,356.33 583.8,356.32 584.0,356.32 584.2,356.31 584.5,356.31 584.8,356.30 585.0,356.30 585.2,356.29 585.5,356.29 585.8,356.28 586.0,356.27 586.2,356.27 586.5,356.26 586.8,356.26 587.0,356.25 587.2,356.24 587.5,356.24 587.8,356.23 588.0,356.22 588.2,356.22 588.5,356.21 588.8,356.20 589.0,356.19 589.2,356.19 589.5,356.18 589.8,356.17 590.0,356.17 590.2,356.16 590.5,356.15 590.8,356.14 591.0,356.14 591.2,356.13 591.5,356.12 591.8,356.11 592.0,356.10 592.2,356.10 592.5,356.09 592.8,356.08 593.0,356.07 593.2,356.06 593.5,356.06 593.8,356.05 594.0,356.04 594.2,356.03 594.5,356.02 594.8,356.01 595.0,356.00 595.2,355.99 595.5,355.99 595.8,355.98 596.0,355.97 596.2,355.96 596.5,355.95 596.8,355.94 597.0,355.93 597.2,355.92 597.5,355.91 597.8,355.90 598.0,355.89 598.2,355.88 598.5,355.87 598.8,355.86 599.0,355.85 599.2,355.84 599.5,355.83 599.8,355.82 600.0,355.81 600.2,355.80 600.5,355.79 600.8,355.78 601.0,355.77 601.2,355.76 601.5,355.75 601.8,355.74 602.0,355.73 602.2,355.72 602.5,355.71 602.8,355.70 603.0,355.69 603.2,355.68 603.5,355.67 603.8,355.66 604.0,355.65 604.2,355.64 604.5,355.63 604.8,355.62 605.0,355.60 605.2,355.59 605.5,355.58 605.8,355.57 606.0,355.56 606.2,355.55 606.5,355.54 606.8,355.53 607.0,355.52 607.2,355.50 607.5,355.49 607.8,355.48 608.0,355.47 608.2,355.46 608.5,355.45 608.8,355.44 609.0,355.42 609.2,355.41 609.5,355.40 609.8,355.39 610.0,355.38 610.2,355.37 610.5,355.35 610.8,355.34 611.0,355.33 611.2,355.32 611.5,355.31 611.8,355.29 612.0,355.28 612.2,355.27 612.5,355.26 612.8,355.25 613.0,355.23 613.2,355.22 613.5,355.21 613.8,355.20 614.0,355.19 614.2,355.17 614.5,355.16 614.8,355.15 615.0,355.14 615.2,355.12 615.5,355.11 615.8,355.10 616.0,355.09 616.2,355.07 616.5,355.06 616.8,355.05 617.0,355.04 617.2,355.02 617.5,355.01 617.8,355.00 618.0,354.99 618.2,354.97 618.5,354.96 618.8,354.95 619.0,354.94 619.2,354.92 619.5,354.91 619.8,354.90 620.0,354.88 620.2,354.87 620.5,354.86 620.8,354.85 621.0,354.83 621.2,354.82 621.5,354.81 621.8,354.79 622.0,354.78 622.2,354.77 622.5,354.76 622.8,354.74 623.0,354.73 623.2,354.72 623.5,354.70 623.8,354.69 624.0,354.68 624.2,354.66 624.5,354.65 624.8,354.64 625.0,354.63 625.2,354.61 625.5,354.60 625.8,354.59 626.0,354.57 626.2,354.56 626.5,354.55 626.8,354.53 627.0,354.52 627.2,354.51 627.5,354.49 627.8,354.48 628.0,354.47 628.2,354.45 628.5,354.44 628.8,354.43 629.0,354.41 629.2,354.40 629.5,354.39 629.8,354.38 630.0,354.36 630.2,354.35 630.5,354.34 630.8,354.32 631.0,354.31 631.2,354.30 631.5,354.28 631.8,354.27 632.0,354.26 632.2,354.24 632.5,354.23 632.8,354.22 633.0,354.20 633.2,354.19 633.5,354.18 633.8,354.16 634.0,354.15 634.2,354.14 634.5,354.12 634.8,354.11 635.0,354.10 635.2,354.08 635.5,354.07 635.8,354.06 636.0,354.04 636.2,354.03 636.5,354.02 636.8,354.00 637.0,353.99 637.2,353.98 637.5,353.96 637.8,353.95 638.0,353.94 638.2,353.92 638.5,353.91 638.8,353.90 639.0,353.88 639.2,353.87 639.5,353.86 639.8,353.84 640.0,353.83 640.2,353.82 640.5,353.80 640.8,353.79 641.0,353.78 641.2,353.76 641.5,353.75 641.8,353.74 642.0,353.72 642.2,353.71 642.5,353.70 642.8,353.68 643.0,353.67 643.2,353.66 643.5,353.64 643.8,353.63 644.0,353.62 644.2,353.60 644.5,353.59 644.8,353.58 645.0,353.56 645.2,353.55 645.5,353.54 645.8,353.52 646.0,353.51 646.2,353.50 646.5,353.49 646.8,353.47 647.0,353.46 647.2,353.45 647.5,353.43 647.8,353.42 648.0,353.41 648.2,353.39 648.5,353.38 648.8,353.37 649.0,353.35 649.2,353.34 649.5,353.33 649.8,353.32 650.0,353.30 650.2,353.29 650.5,353.28 650.8,353.26 651.0,353.25 651.2,353.24 651.5,353.22 651.8,353.21 652.0,353.20 652.2,353.19 652.5,353.17 652.8,353.16 653.0,353.15 653.2,353.13 653.5,353.12 653.8,353.11 654.0,353.10 654.2,353.08 654.5,353.07 654.8,353.06 655.0,353.04 655.2,353.03 655.5,353.02 655.8,353.01 656.0,352.99 656.2,352.98 656.5,352.97 656.8,352.96 657.0,352.94 657.2,352.93 657.5,352.92 657.8,352.91 658.0,352.89 658.2,352.88 658.5,352.87 658.8,352.85 659.0,352.84 659.2,352.83 659.5,352.82 659.8,352.80 660.0,352.79 660.2,352.78 660.5,352.77 660.8,352.76 661.0,352.74 661.2,352.73 661.5,352.72 661.8,352.71 662.0,352.69 662.2,352.68 662.5,352.67 662.8,352.66 663.0,352.64 663.2,352.63 663.5,352.62 663.8,352.61 664.0,352.59 664.2,352.58 664.5,352.57 664.8,352.56 665.0,352.55 665.2,352.53 665.5,352.52 665.8,352.51 666.0,352.50 666.2,352.49 666.5,352.47 666.8,352.46 667.0,352.45 667.2,352.44 667.5,352.43 667.8,352.41 668.0,352.40 668.2,352.39 668.5,352.38 668.8,352.37 669.0,352.35 669.2,352.34 669.5,352.33 669.8,352.32 670.0,352.31 670.2,352.30 670.5,352.28 670.8,352.27 671.0,352.26 671.2,352.25 671.5,352.24 671.8,352.23 672.0,352.21 672.2,352.20 672.5,352.19 672.8,352.18 673.0,352.17 673.2,352.16 673.5,352.14 673.8,352.13 674.0,352.12 674.2,352.11 674.5,352.10 674.8,352.09 675.0,352.08" stroke="#00004C"/>
<polyline points="253.0,585.17 253.2,585.14 253.5,585.12 253.8,585.10 254.0,585.07 254.2,585.05 254.5,585.03 254.8,585.00 255.0,584.98 255.2,584.96 255.5,584.94 255.8,584.92 256.0,584.89 256.2,584.87 256.5,584.85 256.8,584.83 257.0,584.81 257.2,584.79 257.5,584.77 257.8,584.75 258.0,584.73 258.2,584.71 258.5,584.70 258.8,584.68 259.0,584.66 259.2,584.64 259.5,584.62 259.8,584.61 260.0,584.59 260.2,584.57 260.5,584.56 260.8,584.54 261.0,584.53 261.2,584.51 261.5,584.50 261.8,584.48 262.0,584.47 262.2,584.45 262.5,584.44 262.8,584.42 263.0,584.41 263.2,584.40 263.5,584.39 263.8,584.37 264.0,584.36 264.2,584.35 264.5,584.34 264.8,584.33 265.0,584.32 265.2,584.31 265.5,584.30 265.8,584.29 266.0,584.28 266.2,584.27 266.5,584.26 266.8,584.25 267.0,584.24 267.2,584.24 267.5,584.23 267.8,584.22 268.0,584.22 268.2,584.21 268.5,584.20 268.8,584.20 269.0,584.19 269.2,584.19 269.5,584.19 269.8,584.18 270.0,584.18 270.2,584.18 270.5,584.17 270.8,584.17 271.0,584.17 271.2,584.17 271.5,584.17 271.8,584.17 272.0,584.16 272.2,584.16 272.5,584.17 272.8,584.17 273.0,584.17 273.2,584.17 273.5,584.17 273.8,584.17 274.0,584.18 274.2,584.18 274.5,584.18 274.8,584.19 275.0,584.19 275.2,584.20 275.5,584.20 275.8,584.21 276.0,584.22 276.2,584.22 276.5,584.23 276.8,584.24 277.0,584.25 277.2,584.26 277.5,584.26 277.8,584.27 278.0,584.28 278.2,584.30 278.5,584.31 278.8,584.32 279.0,584.33 279.2,584.34 279.5,584.36 279.8,584.37 280.0,584.38 280.2,584.40 280.5,584.41 280.8,584.43 281.0,584.44 281.2,584.46 281.5,584.48 281.8,584.50 282.0,584.51 282.2,584.53 282.5,584.55 282.8,584.57 283.0,584.59 283.2,584.61 283.5,584.64 283.8,584.66 284.0,584.68 284.2,584.70 284.5,584.73 284.8,584.75 285.0,584.78 285.2,584.80 285.5,584.83 285.8,584.86 286.0,584.88 286.2,584.91 286.5,584.94 286.8,584.97 287.0,585.00 287.2,585.03 287.5,585.06 287.8,585.09 288.0,585.12 288.2,585.16 288.5,585.19 288.8,585.22 289.0,585.26 289.2,585.30 289.5,585.33 289.8,585.37 290.0,585.41 290.2,585.44 290.5,585.48 290.8,585.52 291.0,585.56 291.2,585.60 291.5,585.65 291.8,585.69 292.0,585.73 292.2,585.78 292.5,585.82 292.8,585.87 293.0,585.91 293.2,585.96 293.5,586.01 293.8,586.06 294.0,586.11 294.2,586.16 294.5,586.21 294.8,586.26 295.0,586.31 295.2,586.37 295.5,586.42 295.8,586.48 296.0,586.53 296.2,586.59 296.5,586.65 296.8,586.70 297.0,586.76 297.2,586.82 297.5,586.89 297.8,586.95 298.0,587.01 298.2,587.08 298.5,587.14 298.8,587.21 299.0,587.27 299.2,587.34 299.5,587.41 299.8,587.48 300.0,587.55 300.2,587.62 300.5,587.69 300.8,587.77 301.0,587.84 301.2,587.92 301.5,587.99 301.8,588.07 302.0,588.15 302.2,588.23 302.5,588.31 302.8,588.39 303.0,588.48 303.2,588.56 303.5,588.65 303.8,588.73 304.0,588.82 304.2,588.91 304.5,589.00 304.8,589.09 305.0,589.18 305.2,589.28 305.5,589.37 305.8,589.47 306.0,589.56 306.2,589.66 306.5,589.76 306.8,589.86 307.0,589.97 307.2,590.07 307.5,590.17 307.8,590.28 308.0,590.39 308.2,590.50 308.5,590.61 308.8,590.72 309.0,590.83 309.2,590.95 309.5,591.06 309.8,591.18 310.0,591.30 310.2,591.42 310.5,591.54 310.8,591.67 311.0,591.79 311.2,591.92 311.5,592.05 311.8,592.18 312.0,592.31 312.2,592.44 312.5,592.58 312.8,592.71 313.0,592.85 313.2,592.99 313.5,593.13 313.8,593.28 314.0,593.42 314.2,593.57 314.5,593.72 314.8,593.87 315.0,594.02 315.2,594.18 315.5,594.33 315.8,594.49 316.0,594.65 316.2,594.82 316.5,594.98 316.8,595.15 317.0,595.32 317.2,595.49 317.5,595.66 317.8,595.84 318.0,596.02 318.2,596.20 318.5,596.38 318.8,596.56 319.0,596.75 319.2,596.94 319.5,597.13 319.8,597.32 320.0,597.52 320.2,597.72 320.5,597.92 320.8,598.13 321.0,598.33 321.2,598.54 321.5,598.76 321.8,598.97 322.0,599.19 322.2,599.41 322.5,599.63 322.8,599.86 323.0,600.09 323.2,600.32 323.5,600.56 323.8,600.80 324.0,601.04 324.2,601.29 324.5,601.54 324.8,601.79 325.0,602.04 325.2,602.30 325.5,602.57 325.8,602.83 326.0,603.10 326.2,603.38 326.5,603.65 326.8,603.94 327.0,604.22 327.2,604.51 327.5,604.81 327.8,605.10 328.0,605.41 328.2,605.71 328.5,606.02 328.8,606.34 329.0,606.66 329.2,606.98 329.5,607.31 329.8,607.65 330.0,607.99 330.2,608.33 330.5,608.68 330.8,609.04 331.0,609.40 331.2,609.76 331.5,610.14 331.8,610.52 332.0,610.90 332.2,611.29 332.5,611.69 332.8,612.09 333.0,612.50 333.2,612.91 333.5,613.34 333.8,613.77 334.0,614.20 334.2,614.65 334.5,615.10 334.8,615.56 335.0,616.03 335.2,616.51 335.5,616.99 335.8,617.49 336.0,617.99 336.2,618.50 336.5,619.02 336.8,619.55 337.0,620.09 337.2,620.65 337.5,621.21 337.8,621.78 338.0,622.37 338.2,622.96 338.5,623.57 338.8,624.19 339.0,624.83 339.2,625.48 339.5,626.14 339.8,626.82 340.0,627.51 340.2,628.21 340.5,628.94 340.8,629.68 341.0,630.43 341.2,631.21 341.5,632.01 341.8,632.82 342.0,633.65 342.2,634.51 342.5,635.39 342.8,636.29 343.0,637.22 343.2,638.17 343.5,639.15 343.8,640.16 344.0,641.20 344.2,642.27 344.5,643.38 344.8,644.51 345.0,645.69 345.2,646.91 345.5,648.17 345.8,649.47 346.0,650.82 346.2,652.22 346.5,653.68 346.8,655.19 347.0,656.76 347.2,658.41 347.5,660.12 347.8,661.91 348.0,663.79 348.2,665.76 348.5,667.83 348.8,670.00 349.0,670.00 349.2,670.00 349.5,670.00 349.8,670.00 350.0,670.00 350.2,670.00 350.5,670.00 350.8,670.00 351.0,670.00 351.2,670.00 351.5,670.00 351.8,670.00 352.0,670.00 352.2,670.00 352.5,670.00 352.8,670.00 353.0,670.00 353.2,670.00 353.5,670.00 353.8,670.00 354.0,670.00 354.2,670.00 354.5,670.00 354.8,670.00 355.0,670.00 355.2,670.00 355.5,670.00 355.8,670.00 356.0,670.00 356.2,670.00 356.5,669.41 356.8,667.11 357.0,664.92 357.2,662.83 357.5,660.84 357.8,658.93 358.0,657.11 358.2,655.35 358.5,653.67 358.8,652.06 359.0,650.50 359.2,649.00 359.5,647.55 359.8,646.15 360.0,644.80 360.2,643.49 360.5,642.22 360.8,640.99 361.0,639.80 361.2,638.65 361.5,637.52 361.8,636.43 362.0,635.37 362.2,634.34 362.5,633.33 362.8,632.36 363.0,631.40 363.2,630.47 363.5,629.57 363.8,628.68 364.0,627.82 364.2,626.98 364.5,626.16 364.8,625.35 365.0,624.57 365.2,623.80 365.5,623.05 365.8,622.32 366.0,621.61 366.2,620.91 366.5,620.22 366.8,619.55 367.0,618.90 367.2,618.26 367.5,617.63 367.8,617.02 368.0,616.42 368.2,615.84 368.5,615.26 368.8,614.70 369.0,614.15 369.2,613.62 369.5,613.09 369.8,612.58 370.0,612.08 370.2,611.59 370.5,611.11 370.8,610.64 371.0,610.18 371.2,609.74 371.5,609.30 371.8,608.87 372.0,608.46 372.2,608.05 372.5,607.66 372.8,607.28 373.0,606.90 373.2,606.54 373.5,606.18 373.8,605.84 374.0,605.50 374.2,605.18 374.5,604.86 374.8,604.56 375.0,604.26 375.2,603.98 375.5,603.70 375.8,603.44 376.0,603.18 376.2,602.94 376.5,602.70 376.8,602.48 377.0,602.26 377.2,602.06 377.5,601.86 377.8,601.68 378.0,601.50 378.2,601.34 378.5,601.19 378.8,601.05 379.0,600.92 379.2,600.80 379.5,600.69 379.8,600.59 380.0,600.51 380.2,600.44 380.5,600.37 380.8,600.33 381.0,600.29 381.2,600.27 381.5,600.26 381.8,600.26 382.0,600.28 382.2,600.31 382.5,600.36 382.8,600.42 383.0,600.49 383.2,600.59 383.5,600.69 383.8,600.82 384.0,600.96 384.2,601.12 384.5,601.30 384.8,601.49 385.0,601.71 385.2,601.95 385.5,602.20 385.8,602.48 386.0,602.79 386.2,603.11 386.5,603.46 386.8,603.84 387.0,604.24 387.2,604.68 387.5,605.14 387.8,605.63 388.0,606.16 388.2,606.71 388.5,607.31 388.8,607.95 389.0,608.62 389.2,609.34 389.5,610.10 389.8,610.91 390.0,611.78 390.2,612.70 390.5,613.67 390.8,614.72 391.0,615.82 391.2,617.01 391.5,618.27 391.8,619.62 392.0,621.06 392.2,622.60 392.5,624.25 392.8,626.02 393.0,627.92 393.2,629.96 393.5,632.15 393.8,634.51 394.0,637.04 394.2,639.75 394.5,642.64 394.8,645.69 395.0,648.86 395.2,652.06 395.5,655.13 395.8,657.81 396.0,659.75 396.2,660.57 396.5,660.01 396.8,658.06 397.0,654.97 397.2,651.14 397.5,646.90 397.8,642.52 398.0,638.16 398.2,633.92 398.5,629.84 398.8,625.94 399.0,622.22 399.2,618.67 399.5,615.29 399.8,612.06 400.0,608.97 400.2,606.01 400.5,603.17 400.8,600.43 401.0,597.80 401.2,595.26 401.5,592.81 401.8,590.43 402.0,588.13 402.2,585.89 402.5,583.72 402.8,581.61 403.0,579.55 403.2,577.54 403.5,575.57 403.8,573.66 404.0,571.78 404.2,569.94 404.5,568.15 404.8,566.38 405.0,564.65 405.2,562.95 405.5,561.28 405.8,559.64 406.0,558.02 406.2,556.43 406.5,554.87 406.8,553.32 407.0,551.80 407.2,550.30 407.5,548.82 407.8,547.36 408.0,545.92 408.2,544.50 408.5,543.09 408.8,541.70 409.0,540.32 409.2,538.96 409.5,537.62 409.8,536.28 410.0,534.96 410.2,533.66 410.5,532.36 410.8,531.08 411.0,529.81 411.2,528.55 411.5,527.30 411.8,526.06 412.0,524.83 412.2,523.61 412.5,522.40 412.8,521.20 413.0,520.00 413.2,518.82 413.5,517.64 413.8,516.47 414.0,515.31 414.2,514.16 414.5,513.01 414.8,511.87 415.0,510.74 415.2,509.61 415.5,508.49 415.8,507.38 416.0,506.27 416.2,505.17 416.5,504.07 416.8,502.98 417.0,501.89 417.2,500.81 417.5,499.73 417.8,498.66 418.0,497.59 418.2,496.53 418.5,495.47 418.8,494.42 419.0,493.37 419.2,492.32 419.5,491.28 419.8,490.24 420.0,489.21 420.2,488.18 420.5,487.15 420.8,486.12 421.0,485.10 421.2,484.09 421.5,483.07 421.8,482.06 422.0,481.05 422.2,480.04 422.5,479.04 422.8,478.04 423.0,477.04 423.2,476.04 423.5,475.05 423.8,474.06 424.0,473.07 424.2,472.08 424.5,471.09 424.8,470.11 425.0,469.13 425.2,468.15 425.5,467.17 425.8,466.20 426.0,465.22 426.2,464.25 426.5,463.28 426.8,462.31 427.0,461.34 427.2,460.37 427.5,459.41 427.8,458.44 428.0,457.48 428.2,456.52 428.5,455.56 428.8,454.60 429.0,453.64 429.2,452.68 429.5,451.72 429.8,450.77 430.0,449.81 430.2,448.86 430.5,447.90 430.8,446.95 431.0,446.00 431.2,445.05 431.5,444.10 431.8,443.14 432.0,442.19 432.2,441.25 432.5,440.30 432.8,439.35 433.0,438.40 433.2,437.45 433.5,436.50 433.8,435.56 434.0,434.61 434.2,433.66 434.5,432.72 434.8,431.77 435.0,430.83 435.2,429.88 435.5,428.94 435.8,427.99 436.0,427.05 436.2,426.10 436.5,425.16 436.8,424.22 437.0,423.27 437.2,422.33 437.5,421.39 437.8,420.45 438.0,419.50 438.2,418.56 438.5,417.62 438.8,416.68 439.0,415.74 439.2,414.80 439.5,413.86 439.8,412.92 440.0,411.98 440.2,411.04 440.5,410.11 440.8,409.17 441.0,408.23 441.2,407.30 441.5,406.37 441.8,405.43 442.0,404.50 442.2,403.57 442.5,402.64 442.8,401.72 443.0,400.79 443.2,399.87 443.5,398.95 443.8,398.03 444.0,397.11 444.2,396.20 444.5,395.29 444.8,394.38 445.0,393.47 445.2,392.57 445.5,391.67 445.8,390.77 446.0,389.88 446.2,389.00 446.5,388.11 446.8,387.23 447.0,386.36 447.2,385.49 447.5,384.63 447.8,383.77 448.0,382.92 448.2,382.08 448.5,381.24 448.8,380.41 449.0,379.59 449.2,378.77 449.5,377.97 449.8,377.17 450.0,376.38 450.2,375.60 450.5,374.83 450.8,374.07 451.0,373.32 451.2,372.58 451.5,371.85 451.8,371.14 452.0,370.43 452.2,369.74 452.5,369.06 452.8,368.40 453.0,367.74 453.2,367.10 453.5,366.48 453.8,365.86 454.0,365.27 454.2,364.68 454.5,364.11 454.8,363.56 455.0,363.02 455.2,362.50 455.5,361.99 455.8,361.49 456.0,361.01 456.2,360.55 456.5,360.10 456.8,359.67 457.0,359.25 457.2,358.85 457.5,358.46 457.8,358.08 458.0,357.72 458.2,357.38 458.5,357.04 458.8,356.72 459.0,356.42 459.2,356.13 459.5,355.85 459.8,355.58 460.0,355.32 460.2,355.08 460.5,354.85 460.8,354.62 461.0,354.41 461.2,354.21 461.5,354.02 461.8,353.84 462.0,353.67 462.2,353.50 462.5,353.35 462.8,353.20 463.0,353.06 463.2,352.93 463.5,352.81 463.8,352.69 464.0,352.58 464.2,352.47 464.5,352.37 464.8,352.27 465.0,352.19 465.2,352.10 465.5,352.02 465.8,351.94 466.0,351.87 466.2,351.81 466.5,351.74 466.8,351.68 467.0,351.62 467.2,351.57 467.5,351.52 467.8,351.47 468.0,351.42 468.2,351.38 468.5,351.34 468.8,351.30 469.0,351.26 469.2,351.22 469.5,351.19 469.8,351.15 470.0,351.12 470.2,351.09 470.5,351.06 470.8,351.03 471.0,351.01 471.2,350.98 471.5,350.95 471.8,350.93 472.0,350.91 472.2,350.88 472.5,350.86 472.8,350.84 473.0,350.82 473.2,350.80 473.5,350.78 473.8,350.76 474.0,350.74 474.2,350.72 474.5,350.70 474.8,350.68 475.0,350.66 475.2,350.64 475.5,350.63 475.8,350.61 476.0,350.59 476.2,350.57 476.5,350.56 476.8,350.54 477.0,350.52 477.2,350.51 477.5,350.49 477.8,350.48 478.0,350.46 478.2,350.45 478.5,350.43 478.8,350.42 479.0,350.40 479.2,350.39 479.5,350.37 479.8,350.36 480.0,350.35 480.2,350.33 480.5,350.32 480.8,350.31 481.0,350.29 481.2,350.28 481.5,350.27 481.8,350.26 482.0,350.25 482.2,350.23 482.5,350.22 482.8,350.21 483.0,350.20 483.2,350.19 483.5,350.18 483.8,350.17 484.0,350.16 484.2,350.16 484.5,350.15 484.8,350.14 485.0,350.13 485.2,350.12 485.5,350.12 485.8,350.11 486.0,350.11 486.2,350.10 486.5,350.10 486.8,350.09 487.0,350.09 487.2,350.08 487.5,350.08 487.8,350.08 488.0,350.08 488.2,350.08 488.5,350.07 488.8,350.07 489.0,350.07 489.2,350.07 489.5,350.08 489.8,350.08 490.0,350.08 490.2,350.08 490.5,350.08 490.8,350.09 491.0,350.09 491.2,350.10 491.5,350.10 491.8,350.11 492.0,350.11 492.2,350.12 492.5,350.13 492.8,350.14 493.0,350.14 493.2,350.15 493.5,350.16 493.8,350.17 494.0,350.18 494.2,350.19 494.5,350.21 494.8,350.22 495.0,350.23 495.2,350.24 495.5,350.26 495.8,350.27 496.0,350.29 496.2,350.30 496.5,350.32 496.8,350.33 497.0,350.35 497.2,350.37 497.5,350.39 497.8,350.40 498.0,350.42 498.2,350.44 498.5,350.46 498.8,350.48 499.0,350.50 499.2,350.52 499.5,350.54 499.8,350.57 500.0,350.59 500.2,350.61 500.5,350.64 500.8,350.66 501.0,350.68 501.2,350.71 501.5,350.73 501.8,350.76 502.0,350.78 502.2,350.81 502.5,350.83 502.8,350.86 503.0,350.89 503.2,350.92 503.5,350.94 503.8,350.97 504.0,351.00 504.2,351.03 504.5,351.06 504.8,351.09 505.0,351.12 505.2,351.15 505.5,351.18 505.8,351.21 506.0,351.24 506.2,351.27 506.5,351.30 506.8,351.33 507.0,351.36 507.2,351.40 507.5,351.43 507.8,351.46 508.0,351.49 508.2,351.53 508.5,351.56 508.8,351.59 509.0,351.63 509.2,351.66 509.5,351.69 509.8,351.73 510.0,351.76 510.2,351.79 510.5,351.83 510.8,351.86 511.0,351.90 511.2,351.93 511.5,351.97 511.8,352.00 512.0,352.04 512.2,352.07 512.5,352.11 512.8,352.14 513.0,352.18 513.2,352.21 513.5,352.25 513.8,352.28 514.0,352.32 514.2,352.36 514.5,352.39 514.8,352.43 515.0,352.46 515.2,352.50 515.5,352.53 515.8,352.57 516.0,352.60 516.2,352.64 516.5,352.68 516.8,352.71 517.0,352.75 517.2,352.78 517.5,352.82 517.8,352.85 518.0,352.89 518.2,352.93 518.5,352.96 518.8,353.00 519.0,353.03 519.2,353.07 519.5,353.10 519.8,353.14 520.0,353.17 520.2,353.21 520.5,353.24 520.8,353.28 521.0,353.31 521.2,353.35 521.5,353.38 521.8,353.42 522.0,353.45 522.2,353.49 522.5,353.52 522.8,353.55 523.0,353.59 523.2,353.62 523.5,353.66 523.8,353.69 524.0,353.72 524.2,353.76 524.5,353.79 524.8,353.82 525.0,353.85 525.2,353.89 525.5,353.92 525.8,353.95 526.0,353.99 526.2,354.02 526.5,354.05 526.8,354.08 527.0,354.11 527.2,354.14 527.5,354.18 527.8,354.21 528.0,354.24 528.2,354.27 528.5,354.30 528.8,354.33 529.0,354.36 529.2,354.39 529.5,354.42 529.8,354.45 530.0,354.48 530.2,354.51 530.5,354.54 530.8,354.57 531.0,354.60 531.2,354.63 531.5,354.66 531.8,354.68 532.0,354.71 532.2,354.74 532.5,354.77 532.8,354.80 533.0,354.82 533.2,354.85 533.5,354.88 533.8,354.90 534.0,354.93 534.2,354.96 534.5,354.98 534.8,355.01 535.0,355.04 535.2,355.06 535.5,355.09 535.8,355.11 536.0,355.14 536.2,355.16 536.5,355.19 536.8,355.21 537.0,355.24 537.2,355.26 537.5,355.28 537.8,355.31 538.0,355.33 538.2,355.35 538.5,355.38 538.8,355.40 539.0,355.42 539.2,355.44 539.5,355.47 539.8,355.49 540.0,355.51 540.2,355.53 540.5,355.55 540.8,355.57 541.0,355.60 541.2,355.62 541.5,355.64 541.8,355.66 542.0,355.68 542.2,355.70 542.5,355.72 542.8,355.74 543.0,355.76 543.2,355.77 543.5,355.79 543.8,355.81 544.0,355.83 544.2,355.85 544.5,355.87 544.8,355.88 545.0,355.90 545.2,355.92 545.5,355.94 545.8,355.95 546.0,355.97 546.2,355.99 546.5,356.00 546.8,356.02 547.0,356.04 547.2,356.05 547.5,356.07 547.8,356.08 548.0,356.10 548.2,356.11 548.5,356.13 548.8,356.14 549.0,356.16 549.2,356.17 549.5,356.18 549.8,356.20 550.0,356.21 550.2,356.23 550.5,356.24 550.8,356.25 551.0,356.26 551.2,356.28 551.5,356.29 551.8,356.30 552.0,356.31 552.2,356.33 552.5,356.34 552.8,356.35 553.0,356.36 553.2,356.37 553.5,356.38 553.8,356.39 554.0,356.40 554.2,356.41 554.5,356.42 554.8,356.43 555.0,356.44 555.2,356.45 555.5,356.46 555.8,356.47 556.0,356.48 556.2,356.49 556.5,356.50 556.8,356.51 557.0,356.52 557.2,356.52 557.5,356.53 557.8,356.54 558.0,356.55 558.2,356.55 558.5,356.56 558.8,356.57 559.0,356.58 559.2,356.58 559.5,356.59 559.8,356.60 560.0,356.60 560.2,356.61 560.5,356.61 560.8,356.62 561.0,356.63 561.2,356.63 561.5,356.64 561.8,356.64 562.0,356.65 562.2,356.65 562.5,356.66 562.8,356.66 563.0,356.67 563.2,356.67 563.5,356.67 563.8,356.68 564.0,356.68 564.2,356.69 564.5,356.69 564.8,356.69 565.0,356.69 565.2,356.70 565.5,356.70 565.8,356.70 566.0,356.71 566.2,356.71 566.5,356.71 566.8,356.71 567.0,356.71 567.2,356.72 567.5,356.72 567.8,356.72 568.0,356.72 568.2,356.72 568.5,356.72 568.8,356.72 569.0,356.72 569.2,356.73 569.5,356.73 569.8,356.73 570.0,356.73 570.2,356.73 570.5,356.73 570.8,356.73 571.0,356.73 571.2,356.73 571.5,356.73 571.8,356.73 572.0,356.72 572.2,356.72 572.5,356.72 572.8,356.72 573.0,356.72 573.2,356.72 573.5,356.72 573.8,356.72 574.0,356.71 574.2,356.71 574.5,356.71 574.8,356.71 575.0,356.71 575.2,356.70 575.5,356.70 575.8,356.70 576.0,356.69 576.2,356.69 576.5,356.69 576.8,356.69 577.0,356.68 577.2,356.68 577.5,356.68 577.8,356.67 578.0,356.67 578.2,356.67 578.5,356.66 578.8,356.66 579.0,356.65 579.2,356.65 579.5,356.64 579.8,356.64 580.0,356.64 580.2,356.63 580.5,356.63 580.8,356.62 581.0,356.62 581.2,356.61 581.5,356.61 581.8,356.60 582.0,356.60 582.2,356.59 582.5,356.59 582.8,356.58 583.0,356.57 583.2,356.57 583.5,356.56 583.8,356.56 584.0,356.55 584.2,356.54 584.5,356.54 584.8,356.53 585.0,356.53 585.2,356.52 585.5,356.51 585.8,356.51 586.0,356.50 586.2,356.49 586.5,356.49 586.8,356.48 587.0,356.47 587.2,356.46 587.5,356.46 587.8,356.45 588.0,356.44 588.2,356.43 588.5,356.43 588.8,356.42 589.0,356.41 589.2,356.40 589.5,356.40 589.8,356.39 590.0,356.38 590.2,356.37 590.5,356.36 590.8,356.35 591.0,356.35 591.2,356.34 591.5,356.33 591.8,356.32 592.0,356.31 592.2,356.30 592.5,356.29 592.8,356.29 593.0,356.28 593.2,356.27 593.5,356.26 593.8,356.25 594.0,356.24 594.2,356.23 594.5,356.22 594.8,356.21 595.0,356.20 595.2,356.19 595.5,356.18 595.8,356.17 596.0,356.16 596.2,356.16 596.5,356.15 596.8,356.14 597.0,356.13 597.2,356.12 597.5,356.11 597.8,356.10 598.0,356.09 598.2,356.07 598.5,356.06 598.8,356.05 599.0,356.04 599.2,356.03 599.5,356.02 599.8,356.01 600.0,356.00 600.2,355.99 600.5,355.98 600.8,355.97 601.0,355.96 601.2,355.95 601.5,355.94 601.8,355.93 602.0,355.92 602.2,355.90 602.5,355.89 602.8,355.88 603.0,355.87 603.2,355.86 603.5,355.85 603.8,355.84 604.0,355.83 604.2,355.81 604.5,355.80 604.8,355.79 605.0,355.78 605.2,355.77 605.5,355.76 605.8,355.74 606.0,355.73 606.2,355.72 606.5,355.71 606.8,355.70 607.0,355.69 607.2,355.67 607.5,355.66 607.8,355.65 608.0,355.64 608.2,355.63 608.5,355.61 608.8,355.60 609.0,355.59 609.2,355.58 609.5,355.56 609.8,355.55 610.0,355.54 610.2,355.53 610.5,355.52 610.8,355.50 611.0,355.49 611.2,355.48 611.5,355.47 611.8,355.45 612.0,355.44 612.2,355.43 612.5,355.42 612.8,355.40 613.0,355.39 613.2,355.38 613.5,355.37 613.8,355.35 614.0,355.34 614.2,355.33 614.5,355.31 614.8,355.30 615.0,355.29 615.2,355.28 615.5,355.26 615.8,355.25 616.0,355.24 616.2,355.22 616.5,355.21 616.8,355.20 617.0,355.18 617.2,355.17 617.5,355.16 617.8,355.15 618.0,355.13 618.2,355.12 618.5,355.11 618.8,355.09 619.0,355.08 619.2,355.07 619.5,355.05 619.8,355.04 620.0,355.03 620.2,355.01 620.5,355.00 620.8,354.99 621.0,354.97 621.2,354.96 621.5,354.95 621.8,354.93 622.0,354.92 622.2,354.91 622.5,354.89 622.8,354.88 623.0,354.87 623.2,354.85 623.5,354.84 623.8,354.83 624.0,354.81 624.2,354.80 624.5,354.79 624.8,354.77 625.0,354.76 625.2,354.74 625.5,354.73 625.8,354.72 626.0,354.70 626.2,354.69 626.5,354.68 626.8,354.66 627.0,354.65 627.2,354.64 627.5,354.62 627.8,354.61 628.0,354.59 628.2,354.58 628.5,354.57 628.8,354.55 629.0,354.54 629.2,354.53 629.5,354.51 629.8,354.50 630.0,354.49 630.2,354.47 630.5,354.46 630.8,354.44 631.0,354.43 631.2,354.42 631.5,354.40 631.8,354.39 632.0,354.38 632.2,354.36 632.5,354.35 632.8,354.33 633.0,354.32 633.2,354.31 633.5,354.29 633.8,354.28 634.0,354.27 634.2,354.25 634.5,354.24 634.8,354.22 635.0,354.21 635.2,354.20 635.5,354.18 635.8,354.17 636.0,354.16 636.2,354.14 636.5,354.13 636.8,354.12 637.0,354.10 637.2,354.09 637.5,354.07 637.8,354.06 638.0,354.05 638.2,354.03 638.5,354.02 638.8,354.01 639.0,353.99 639.2,353.98 639.5,353.96 639.8,353.95 640.0,353.94 640.2,353.92 640.5,353.91 640.8,353.90 641.0,353.88 641.2,353.87 641.5,353.85 641.8,353.84 642.0,353.83 642.2,353.81 642.5,353.80 642.8,353.79 643.0,353.77 643.2,353.76 643.5,353.75 643.8,353.73 644.0,353.72 644.2,353.71 644.5,353.69 644.8,353.68 645.0,353.66 645.2,353.65 645.5,353.64 645.8,353.62 646.0,353.61 646.2,353.60 646.5,353.58 646.8,353.57 647.0,353.56 647.2,353.54 647.5,353.53 647.8,353.52 648.0,353.50 648.2,353.49 648.5,353.48 648.8,353.46 649.0,353.45 649.2,353.44 649.5,353.42 649.8,353.41 650.0,353.40 650.2,353.38 650.5,353.37 650.8,353.36 651.0,353.34 651.2,353.33 651.5,353.32 651.8,353.30 652.0,353.29 652.2,353.28 652.5,353.26 652.8,353.25 653.0,353.24 653.2,353.22 653.5,353.21 653.8,353.20 654.0,353.18 654.2,353.17 654.5,353.16 654.8,353.14 655.0,353.13 655.2,353.12 655.5,353.11 655.8,353.09 656.0,353.08 656.2,353.07 656.5,353.05 656.8,353.04 657.0,353.03 657.2,353.01 657.5,353.00 657.8,352.99 658.0,352.98 658.2,352.96 658.5,352.95 658.8,352.94 659.0,352.92 659.2,352.91 659.5,352.90 659.8,352.89 660.0,352.87 660.2,352.86 660.5,352.85 660.8,352.84 661.0,352.82 661.2,352.81 661.5,352.80 661.8,352.78 662.0,352.77 662.2,352.76 662.5,352.75 662.8,352.73 663.0,352.72 663.2,352.71 663.5,352.70 663.8,352.68 664.0,352.67 664.2,352.66 664.5,352.65 664.8,352.63 665.0,352.62 665.2,352.61 665.5,352.60 665.8,352.58 666.0,352.57 666.2,352.56 666.5,352.55 666.8,352.54 667.0,352.52 667.2,352.51 667.5,352.50 667.8,352.49 668.0,352.47 668.2,352.46 668.5,352.45 668.8,352.44 669.0,352.43 669.2,352.41 669.5,352.40 669.8,352.39 670.0,352.38 670.2,352.37 670.5,352.35 670.8,352.34 671.0,352.33 671.2,352.32 671.5,352.31 671.8,352.29 672.0,352.28 672.2,352.27 672.5,352.26 672.8,352.25 673.0,352.23 673.2,352.22 673.5,352.21 673.8,352.20 674.0,352.19 674.2,352.18 674.5,352.16 674.8,352.15 675.0,352.14" stroke="#1A1A9C"/>
</g>
<path d="M252,347.5H676M252,670.5H677M675.5,347V671" stroke="#000" stroke-width="1" fill="none"/>
<rect x="252" y="347" width="2" height="324" fill="#000"/>
<rect x="759" y="268" width="108" height="30" fill="#DFDFDF"/>
<rect x="759" y="268" width="107" height="1" fill="#FFFFFF"/>
<rect x="759" y="268" width="1" height="29" fill="#FFFFFF"/>
<rect x="866" y="268" width="1" height="30" fill="#6A6A66"/>
<rect x="759" y="297" width="108" height="1" fill="#6A6A66"/>
<rect x="865" y="269" width="1" height="28" fill="#E6E6DE"/>
<rect x="760" y="296" width="106" height="1" fill="#E6E6DE"/>
<text x="777.8" y="288.5" fill="#000000" class="b" letter-spacing="0.317" style="font-size:15.3px">Down 1%</text>
<rect x="871" y="268" width="108" height="30" fill="#DFDFDF"/>
<rect x="871" y="268" width="107" height="1" fill="#FFFFFF"/>
<rect x="871" y="268" width="1" height="29" fill="#FFFFFF"/>
<rect x="978" y="268" width="1" height="30" fill="#6A6A66"/>
<rect x="871" y="297" width="108" height="1" fill="#6A6A66"/>
<rect x="977" y="269" width="1" height="28" fill="#E6E6DE"/>
<rect x="872" y="296" width="106" height="1" fill="#E6E6DE"/>
<text x="900.8" y="288.5" fill="#000000" class="b" letter-spacing="0.275" style="font-size:15.3px">Up 1%</text>
<rect x="759" y="308" width="218" height="30" fill="#DFDFDF"/>
<rect x="759" y="308" width="217" height="1" fill="#FFFFFF"/>
<rect x="759" y="308" width="1" height="29" fill="#FFFFFF"/>
<rect x="976" y="308" width="1" height="30" fill="#6A6A66"/>
<rect x="759" y="337" width="218" height="1" fill="#6A6A66"/>
<rect x="975" y="309" width="1" height="28" fill="#E6E6DE"/>
<rect x="760" y="336" width="216" height="1" fill="#E6E6DE"/>
<text x="818.2" y="328.5" fill="#000000" class="b" letter-spacing="0.173" style="font-size:15.3px">5% inductors</text>
<rect x="759" y="348" width="108" height="30" fill="#DFDFDF"/>
<rect x="759" y="348" width="107" height="1" fill="#FFFFFF"/>
<rect x="759" y="348" width="1" height="29" fill="#FFFFFF"/>
<rect x="866" y="348" width="1" height="30" fill="#6A6A66"/>
<rect x="759" y="377" width="108" height="1" fill="#6A6A66"/>
<rect x="865" y="349" width="1" height="28" fill="#E6E6DE"/>
<rect x="760" y="376" width="106" height="1" fill="#E6E6DE"/>
<text x="788.8" y="368.5" fill="#000000" class="b" letter-spacing="0.867" style="font-size:15.3px">VSWR</text>
<rect x="871" y="348" width="108" height="30" fill="#DFDFDF"/>
<rect x="871" y="348" width="107" height="1" fill="#FFFFFF"/>
<rect x="871" y="348" width="1" height="29" fill="#FFFFFF"/>
<rect x="978" y="348" width="1" height="30" fill="#6A6A66"/>
<rect x="871" y="377" width="108" height="1" fill="#6A6A66"/>
<rect x="977" y="349" width="1" height="28" fill="#E6E6DE"/>
<rect x="872" y="376" width="106" height="1" fill="#E6E6DE"/>
<text x="907.6" y="368.5" fill="#000000" class="b" letter-spacing="0.133" style="font-size:15.3px">Time</text>
<rect x="759" y="389" width="217" height="29" fill="#DFDFDF"/>
<rect x="759" y="389" width="216" height="1" fill="#FFFFFF"/>
<rect x="759" y="389" width="1" height="28" fill="#FFFFFF"/>
<rect x="975" y="389" width="1" height="29" fill="#8E8E8A"/>
<rect x="759" y="417" width="217" height="1" fill="#8E8E8A"/>
<rect x="974" y="390" width="1" height="27" fill="#E6E6DE"/>
<rect x="760" y="416" width="215" height="1" fill="#E6E6DE"/>
<rect x="758" y="388" width="219" height="1" fill="#000"/>
<rect x="758" y="388" width="1" height="31" fill="#000"/>
<rect x="976" y="388" width="1" height="31" fill="#000"/>
<rect x="758" y="418" width="219" height="1" fill="#000"/>
<rect x="759" y="389" width="216" height="1" fill="#FFF"/>
<rect x="759" y="389" width="1" height="28" fill="#FFF"/>
<rect x="762" y="392" width="211" height="1" fill="url(#dh)"/>
<rect x="762" y="415" width="211" height="1" fill="url(#dh)"/>
<rect x="762" y="392" width="1" height="24" fill="url(#dh)"/>
<rect x="972" y="392" width="1" height="24" fill="url(#dh)"/>
<text x="813.0" y="409.5" fill="#000000" class="b" letter-spacing="0.058" style="font-size:15.3px">Change design</text>
<rect x="759" y="429" width="218" height="30" fill="#DFDFDF"/>
<rect x="759" y="429" width="217" height="1" fill="#FFFFFF"/>
<rect x="759" y="429" width="1" height="29" fill="#FFFFFF"/>
<rect x="976" y="429" width="1" height="30" fill="#6A6A66"/>
<rect x="759" y="458" width="218" height="1" fill="#6A6A66"/>
<rect x="975" y="430" width="1" height="28" fill="#E6E6DE"/>
<rect x="760" y="457" width="216" height="1" fill="#E6E6DE"/>
<text x="793.0" y="449.5" fill="#000000" class="b" letter-spacing="0.226" style="font-size:15.3px">Save overlay plot(s)</text>
<rect x="759" y="469" width="218" height="31" fill="#DFDFDF"/>
<rect x="759" y="469" width="217" height="1" fill="#FFFFFF"/>
<rect x="759" y="469" width="1" height="30" fill="#FFFFFF"/>
<rect x="976" y="469" width="1" height="31" fill="#6A6A66"/>
<rect x="759" y="499" width="218" height="1" fill="#6A6A66"/>
<rect x="975" y="470" width="1" height="29" fill="#E6E6DE"/>
<rect x="760" y="498" width="216" height="1" fill="#E6E6DE"/>
<text x="798.4" y="489.5" fill="#000000" class="b" letter-spacing="0.272" style="font-size:15.3px">Get overlay plot(s)</text>
<rect x="759" y="509" width="218" height="31" fill="#DFDFDF"/>
<rect x="759" y="509" width="217" height="1" fill="#FFFFFF"/>
<rect x="759" y="509" width="1" height="30" fill="#FFFFFF"/>
<rect x="976" y="509" width="1" height="31" fill="#6A6A66"/>
<rect x="759" y="539" width="218" height="1" fill="#6A6A66"/>
<rect x="975" y="510" width="1" height="29" fill="#E6E6DE"/>
<rect x="760" y="538" width="216" height="1" fill="#E6E6DE"/>
<text x="851.0" y="529.5" fill="#000000" class="b" letter-spacing="-0.150" style="font-size:15.3px">Print</text>
<rect x="759" y="550" width="218" height="30" fill="#DFDFDF"/>
<rect x="759" y="550" width="217" height="1" fill="#FFFFFF"/>
<rect x="759" y="550" width="1" height="29" fill="#FFFFFF"/>
<rect x="976" y="550" width="1" height="30" fill="#6A6A66"/>
<rect x="759" y="579" width="218" height="1" fill="#6A6A66"/>
<rect x="975" y="551" width="1" height="28" fill="#E6E6DE"/>
<rect x="760" y="578" width="216" height="1" fill="#E6E6DE"/>
<text x="814.0" y="570.5" fill="#000000" class="b" letter-spacing="0.267" style="font-size:15.3px">Write Elsie file</text>
<rect x="759" y="590" width="218" height="30" fill="#DFDFDF"/>
<rect x="759" y="590" width="217" height="1" fill="#FFFFFF"/>
<rect x="759" y="590" width="1" height="29" fill="#FFFFFF"/>
<rect x="976" y="590" width="1" height="30" fill="#6A6A66"/>
<rect x="759" y="619" width="218" height="1" fill="#6A6A66"/>
<rect x="975" y="591" width="1" height="28" fill="#E6E6DE"/>
<rect x="760" y="618" width="216" height="1" fill="#E6E6DE"/>
<text x="803.0" y="610.5" fill="#000000" class="b" letter-spacing="0.341" style="font-size:15.3px">Write LTspice file</text>
<rect x="759" y="630" width="218" height="31" fill="#DFDFDF"/>
<rect x="759" y="630" width="217" height="1" fill="#FFFFFF"/>
<rect x="759" y="630" width="1" height="30" fill="#FFFFFF"/>
<rect x="976" y="630" width="1" height="31" fill="#6A6A66"/>
<rect x="759" y="660" width="218" height="1" fill="#6A6A66"/>
<rect x="975" y="631" width="1" height="29" fill="#E6E6DE"/>
<rect x="760" y="659" width="216" height="1" fill="#E6E6DE"/>
<text x="854.0" y="650.5" fill="#000000" class="b" letter-spacing="-0.300" style="font-size:15.3px">Exit</text>
</svg></body></html>
